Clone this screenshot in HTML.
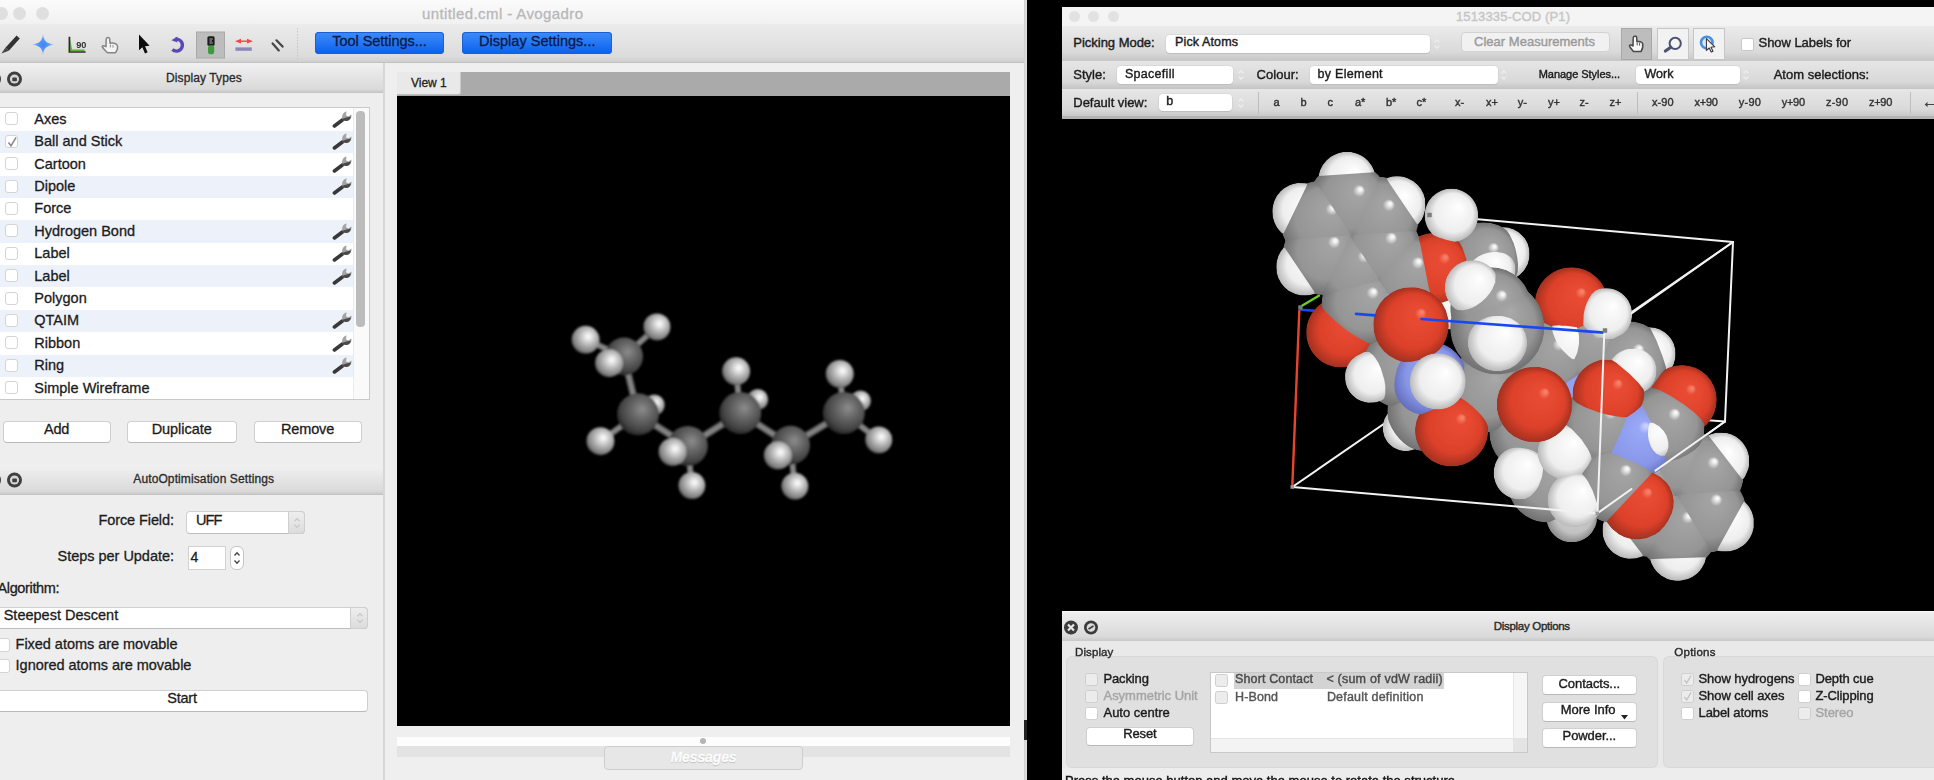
<!DOCTYPE html>
<html lang="en">
<head>
<meta charset="utf-8">
<title>Avogadro and Mercury</title>
<style>
html,body{margin:0;padding:0;}
body{width:1934px;height:780px;overflow:hidden;background:#000;position:relative;font-family:"Liberation Sans",sans-serif;color:#1c1c1c;}
.abs{position:absolute;}
#page{position:absolute;left:0;top:0;width:1934px;height:780px;overflow:hidden;filter:blur(0.45px);}
.t{position:absolute;white-space:nowrap;line-height:1;-webkit-text-stroke:0.3px;}
/* left window */
#av{position:absolute;left:0;top:0;width:1027px;height:780px;background:#ececec;overflow:hidden;}
#av .title{position:absolute;left:0;top:0;width:1027px;height:24px;background:linear-gradient(#fbfbfb,#f1f1f1);}
#av .toolbar{position:absolute;left:0;top:24px;width:1027px;height:38px;background:linear-gradient(#ececec,#dcdcdc 85%,#cfcfcf);border-bottom:1px solid #c2c2c2;}
.tl{position:absolute;width:13px;height:13px;border-radius:50%;background:#dfdfdf;}
.bluebtn{position:absolute;height:22px;border-radius:4px;background:linear-gradient(#3f8cf8,#0a60ee);color:#111a3a;font-size:14.5px;text-align:center;line-height:21px;box-shadow:0 0 0 1px #1b5fd6 inset;}
.dockhdr{position:absolute;left:0;width:383px;height:29px;background:linear-gradient(#f1f1f1,#dadada 90%,#c9c9c9);border-bottom:1px solid #c4c4c4;font-size:12px;text-align:center;line-height:29px;color:#222;}
.dockico{position:absolute;width:13px;height:13px;border-radius:50%;background:#444;}
.list{position:absolute;left:-4px;top:107px;width:372px;height:291px;background:#fff;border:1px solid #c9c9c9;overflow:hidden;}
.row{position:absolute;left:0;width:357px;height:22.35px;font-size:15px;}
.row.alt{background:#edf1f9;}
.row span{position:absolute;left:38px;top:3px;line-height:17px;white-space:nowrap;}
.cb{position:absolute;width:13px;height:13px;border:1px solid #d4d4d4;border-radius:3px;background:#fff;box-sizing:border-box;}
.wbtn{position:absolute;height:21px;border-radius:4px;background:#fff;border:1px solid #cfcfcf;border-bottom-color:#b9b9b9;box-sizing:border-box;text-align:center;font-size:14.5px;line-height:19px;color:#1a1a1a;}
.combo{position:absolute;border-radius:4px;background:#fff;border:1px solid #d0d0d0;border-bottom-color:#bdbdbd;box-sizing:border-box;font-size:14.5px;color:#1a1a1a;}
.combo .arr{position:absolute;right:-1px;top:-1px;bottom:-1px;width:15px;background:linear-gradient(#eeeeee,#dcdcdc);border:1px solid #cfcfcf;border-radius:0 4px 4px 0;box-sizing:border-box;}
.combo .txt{position:absolute;left:8px;top:0;white-space:nowrap;}
/* right window */
#mc .t{-webkit-text-stroke:0.4px;}
#mc{position:absolute;width:872px;height:780px;background:#000;overflow:hidden;font-size:13px;}
</style>
</head>
<body>
<div id="page">

<div id="av">
<div class="title"></div>
<div class="tl" style="left:-5px;top:7px"></div>
<div class="tl" style="left:13px;top:7px"></div>
<div class="tl" style="left:36px;top:7px"></div>
<div class="t" style="left:422.0px;top:6.2px;font-size:15px;line-height:15px;letter-spacing:0.395px;color:#b8b8b8;">untitled.cml - Avogadro</div>
<div class="toolbar"></div>
<svg class="abs" style="left:0;top:24px" width="310" height="40" viewBox="0 24 310 40">
<defs><filter id="bli"><feGaussianBlur stdDeviation="0.45"/></filter>
<radialGradient id="gstar" cx="0.5" cy="0.5" r="0.5"><stop offset="0" stop-color="#3f86f2"/><stop offset="0.55" stop-color="#5b9cf6"/><stop offset="1" stop-color="#b9d6fb"/></radialGradient></defs>
<g filter="url(#bli)">
<rect x="196.5" y="32" width="28" height="26" fill="#bdbdbd"/>
<rect x="196.5" y="32" width="28" height="26" fill="none" stroke="#a9a9a9" stroke-width="1"/>
<!-- pencil -->
<path d="M5.4 47.8 L16.6 35.6 L19.8 38.4 L8.8 50.8 Z" fill="#333"/>
<path d="M5.4 47.8 L8.8 50.8 L1.4 53.4 Z" fill="#444"/>
<!-- star -->
<path d="M43 33.8 C44 41 45.5 43.2 54.5 44.6 C45.5 46 44 48.2 43 55.4 C42 48.2 40.5 46 31.8 44.6 C40.5 43.2 42 41 43 33.8 Z" fill="url(#gstar)"/>
<!-- axes 90 -->
<path d="M70.2 38 L70.2 51 L84.5 51 L84.5 49.6 L72 49.6 Z" fill="#58b236"/>
<path d="M69.4 36.8 L69.4 52 L85.6 52" fill="none" stroke="#2b2b2b" stroke-width="1.7"/>
<text x="76.2" y="47.6" font-family="Liberation Sans, sans-serif" font-size="9.2" font-weight="bold" fill="#333">90</text>
<!-- hand -->
<path d="M107.6 37.6 C108.8 37.2 109.6 38 109.7 39.2 L110 43.2 C112.5 42.6 116.4 43.4 117.2 45.2 C118 47.4 117.2 50.4 115.4 52.8 L107.6 52.8 C105.6 50.8 103 48.4 102.2 46.6 C102.6 45.4 104.4 45.4 106 46.8 L106.2 39.2 C106.3 38.2 106.8 37.8 107.6 37.6 Z" fill="#f4f4f4" stroke="#868686" stroke-width="1.5" stroke-linejoin="round"/>
<path d="M110.4 44.6 L110.4 47.4 M113 45 L113 47.6" stroke="#8a8a8a" stroke-width="1"/>
<!-- cursor arrow -->
<path d="M139 34.6 L139 50.2 L142.4 47.2 L145 53.4 L147.6 52.2 L145 46.2 L149.6 45.8 Z" fill="#0a0a0a"/>
<!-- rotate -->
<path d="M175.4 39.2 A6 6 0 1 1 172.4 49.6" fill="none" stroke="#5a48b4" stroke-width="3.4"/>
<path d="M171.4 40.2 L177.4 36.4 L177.4 42.6 Z" fill="#5a48b4"/>
<!-- selected capsule -->
<rect x="207.4" y="36.2" width="7.2" height="9.6" rx="1.6" fill="#1a1a1a"/>
<rect x="208" y="45.6" width="6.2" height="8.6" rx="2.2" fill="#3d9a3d"/>
<path d="M209.4 39 L212.8 39 M209.4 41 L212 41 M209.4 43 L212.8 43" stroke="#bdbdbd" stroke-width="0.9"/>
<!-- red measure -->
<path d="M235 41.2 L241 38.8 L241 43.6 Z M253 41.2 L247 38.8 L247 43.6 Z" fill="#f04848"/>
<path d="M240 41.2 L248 41.2" stroke="#f04848" stroke-width="1.4"/>
<rect x="235.4" y="47.4" width="16.4" height="3.4" fill="#8a88b4"/>
<!-- two strokes -->
<path d="M272.6 43.4 L278.8 50.4 M276.4 40.3 L282.6 46.6" stroke="#444" stroke-width="2.2" stroke-linecap="round"/>
<!-- separators -->
<path d="M297.5 28 L297.5 60" stroke="#c4c4c4" stroke-width="1" stroke-dasharray="1.5 1.5"/>
</g>
</svg>

<div class="bluebtn" style="left:315px;top:32px;width:129px;"></div>
<div class="bluebtn" style="left:462px;top:32px;width:150px;"></div>
<div class="t" style="left:332.3px;top:34.2px;font-size:14.5px;line-height:14.5px;letter-spacing:-0.047px;color:#0c1a4a;">Tool Settings...</div>
<div class="t" style="left:479.0px;top:34.2px;font-size:14.5px;line-height:14.5px;letter-spacing:0.025px;color:#0c1a4a;">Display Settings...</div>
<div class="abs" style="left:0;top:63px;width:383px;height:717px;background:#eeeeee;"></div>
<div class="abs" style="left:383px;top:63px;width:1.5px;height:717px;background:#d6d6d6;"></div>
<div class="dockhdr" style="top:63px;"></div>
<div class="dockhdr" style="top:465px;"></div>
<div class="t" style="left:166.0px;top:71.5px;font-size:12px;line-height:12px;letter-spacing:0.102px;color:#2a2a2a;">Display Types</div>
<div class="t" style="left:133.3px;top:473.3px;font-size:12px;line-height:12px;letter-spacing:0.109px;color:#2a2a2a;">AutoOptimisation Settings</div>
<svg class="abs" style="left:-16px;top:71px" width="40" height="16" viewBox="0 0 40 16"><circle cx="9.5" cy="8" r="7.5" fill="#3f3f3f"/><circle cx="30.5" cy="8" r="7.5" fill="#3f3f3f"/><circle cx="30.5" cy="8" r="4.6" fill="#d6d6d6"/><rect x="28.3" y="6.6" width="4.6" height="3.6" rx="0.8" fill="#3f3f3f"/></svg>
<svg class="abs" style="left:-16px;top:472px" width="40" height="16" viewBox="0 0 40 16"><circle cx="9.5" cy="8" r="7.5" fill="#3f3f3f"/><circle cx="30.5" cy="8" r="7.5" fill="#3f3f3f"/><circle cx="30.5" cy="8" r="4.6" fill="#d6d6d6"/><rect x="28.3" y="6.6" width="4.6" height="3.6" rx="0.8" fill="#3f3f3f"/></svg>
<div class="list">
<div class="row" style="top:0.30px;height:22.4px"><div class="cb" style="left:8px;top:4px"></div><div class="t" style="left:37.3px;top:3.5px;font-size:14.5px;line-height:14.5px;">Axes</div><svg class="abs" style="left:335px;top:0.5px" width="22" height="20" viewBox="0 0 22 20"><path d="M2.4 17 L10.4 11" stroke="#383838" stroke-width="3.6" stroke-linecap="round" fill="none"/><path d="M10.2 9.4 C9.6 6 11.6 3.2 14.6 2.6 L14 6.2 L16.4 7.6 L19.4 5.6 C20 8.8 18 11.6 14.8 12 C12.6 12.2 10.8 11.2 10.2 9.4 Z" fill="#a4a4a4"/><path d="M10.4 9.8 L14.4 8.6 L19 7.6 C18.6 10.2 17 11.8 14.8 12 C12.6 12.2 11 11.4 10.4 9.8 Z" fill="#4a4a4a"/></svg></div>
<div class="row alt" style="top:22.70px;height:22.4px"><div class="cb" style="left:8px;top:4px"></div><svg class="abs" style="left:9px;top:5px" width="12" height="12" viewBox="0 0 12 12"><path d="M2.5 6.5 L5 9.8 L10 1.5" fill="none" stroke="#8a8a8a" stroke-width="1.5"/></svg><div class="t" style="left:37.3px;top:3.5px;font-size:14.5px;line-height:14.5px;">Ball and Stick</div><svg class="abs" style="left:335px;top:0.5px" width="22" height="20" viewBox="0 0 22 20"><path d="M2.4 17 L10.4 11" stroke="#383838" stroke-width="3.6" stroke-linecap="round" fill="none"/><path d="M10.2 9.4 C9.6 6 11.6 3.2 14.6 2.6 L14 6.2 L16.4 7.6 L19.4 5.6 C20 8.8 18 11.6 14.8 12 C12.6 12.2 10.8 11.2 10.2 9.4 Z" fill="#a4a4a4"/><path d="M10.4 9.8 L14.4 8.6 L19 7.6 C18.6 10.2 17 11.8 14.8 12 C12.6 12.2 11 11.4 10.4 9.8 Z" fill="#4a4a4a"/></svg></div>
<div class="row" style="top:45.10px;height:22.4px"><div class="cb" style="left:8px;top:4px"></div><div class="t" style="left:37.3px;top:3.5px;font-size:14.5px;line-height:14.5px;">Cartoon</div><svg class="abs" style="left:335px;top:0.5px" width="22" height="20" viewBox="0 0 22 20"><path d="M2.4 17 L10.4 11" stroke="#383838" stroke-width="3.6" stroke-linecap="round" fill="none"/><path d="M10.2 9.4 C9.6 6 11.6 3.2 14.6 2.6 L14 6.2 L16.4 7.6 L19.4 5.6 C20 8.8 18 11.6 14.8 12 C12.6 12.2 10.8 11.2 10.2 9.4 Z" fill="#a4a4a4"/><path d="M10.4 9.8 L14.4 8.6 L19 7.6 C18.6 10.2 17 11.8 14.8 12 C12.6 12.2 11 11.4 10.4 9.8 Z" fill="#4a4a4a"/></svg></div>
<div class="row alt" style="top:67.50px;height:22.4px"><div class="cb" style="left:8px;top:4px"></div><div class="t" style="left:37.3px;top:3.5px;font-size:14.5px;line-height:14.5px;">Dipole</div><svg class="abs" style="left:335px;top:0.5px" width="22" height="20" viewBox="0 0 22 20"><path d="M2.4 17 L10.4 11" stroke="#383838" stroke-width="3.6" stroke-linecap="round" fill="none"/><path d="M10.2 9.4 C9.6 6 11.6 3.2 14.6 2.6 L14 6.2 L16.4 7.6 L19.4 5.6 C20 8.8 18 11.6 14.8 12 C12.6 12.2 10.8 11.2 10.2 9.4 Z" fill="#a4a4a4"/><path d="M10.4 9.8 L14.4 8.6 L19 7.6 C18.6 10.2 17 11.8 14.8 12 C12.6 12.2 11 11.4 10.4 9.8 Z" fill="#4a4a4a"/></svg></div>
<div class="row" style="top:89.90px;height:22.4px"><div class="cb" style="left:8px;top:4px"></div><div class="t" style="left:37.3px;top:3.5px;font-size:14.5px;line-height:14.5px;">Force</div></div>
<div class="row alt" style="top:112.30px;height:22.4px"><div class="cb" style="left:8px;top:4px"></div><div class="t" style="left:37.3px;top:3.5px;font-size:14.5px;line-height:14.5px;">Hydrogen Bond</div><svg class="abs" style="left:335px;top:0.5px" width="22" height="20" viewBox="0 0 22 20"><path d="M2.4 17 L10.4 11" stroke="#383838" stroke-width="3.6" stroke-linecap="round" fill="none"/><path d="M10.2 9.4 C9.6 6 11.6 3.2 14.6 2.6 L14 6.2 L16.4 7.6 L19.4 5.6 C20 8.8 18 11.6 14.8 12 C12.6 12.2 10.8 11.2 10.2 9.4 Z" fill="#a4a4a4"/><path d="M10.4 9.8 L14.4 8.6 L19 7.6 C18.6 10.2 17 11.8 14.8 12 C12.6 12.2 11 11.4 10.4 9.8 Z" fill="#4a4a4a"/></svg></div>
<div class="row" style="top:134.70px;height:22.4px"><div class="cb" style="left:8px;top:4px"></div><div class="t" style="left:37.3px;top:3.5px;font-size:14.5px;line-height:14.5px;">Label</div><svg class="abs" style="left:335px;top:0.5px" width="22" height="20" viewBox="0 0 22 20"><path d="M2.4 17 L10.4 11" stroke="#383838" stroke-width="3.6" stroke-linecap="round" fill="none"/><path d="M10.2 9.4 C9.6 6 11.6 3.2 14.6 2.6 L14 6.2 L16.4 7.6 L19.4 5.6 C20 8.8 18 11.6 14.8 12 C12.6 12.2 10.8 11.2 10.2 9.4 Z" fill="#a4a4a4"/><path d="M10.4 9.8 L14.4 8.6 L19 7.6 C18.6 10.2 17 11.8 14.8 12 C12.6 12.2 11 11.4 10.4 9.8 Z" fill="#4a4a4a"/></svg></div>
<div class="row alt" style="top:157.10px;height:22.4px"><div class="cb" style="left:8px;top:4px"></div><div class="t" style="left:37.3px;top:3.5px;font-size:14.5px;line-height:14.5px;">Label</div><svg class="abs" style="left:335px;top:0.5px" width="22" height="20" viewBox="0 0 22 20"><path d="M2.4 17 L10.4 11" stroke="#383838" stroke-width="3.6" stroke-linecap="round" fill="none"/><path d="M10.2 9.4 C9.6 6 11.6 3.2 14.6 2.6 L14 6.2 L16.4 7.6 L19.4 5.6 C20 8.8 18 11.6 14.8 12 C12.6 12.2 10.8 11.2 10.2 9.4 Z" fill="#a4a4a4"/><path d="M10.4 9.8 L14.4 8.6 L19 7.6 C18.6 10.2 17 11.8 14.8 12 C12.6 12.2 11 11.4 10.4 9.8 Z" fill="#4a4a4a"/></svg></div>
<div class="row" style="top:179.50px;height:22.4px"><div class="cb" style="left:8px;top:4px"></div><div class="t" style="left:37.3px;top:3.5px;font-size:14.5px;line-height:14.5px;">Polygon</div></div>
<div class="row alt" style="top:201.90px;height:22.4px"><div class="cb" style="left:8px;top:4px"></div><div class="t" style="left:37.3px;top:3.5px;font-size:14.5px;line-height:14.5px;">QTAIM</div><svg class="abs" style="left:335px;top:0.5px" width="22" height="20" viewBox="0 0 22 20"><path d="M2.4 17 L10.4 11" stroke="#383838" stroke-width="3.6" stroke-linecap="round" fill="none"/><path d="M10.2 9.4 C9.6 6 11.6 3.2 14.6 2.6 L14 6.2 L16.4 7.6 L19.4 5.6 C20 8.8 18 11.6 14.8 12 C12.6 12.2 10.8 11.2 10.2 9.4 Z" fill="#a4a4a4"/><path d="M10.4 9.8 L14.4 8.6 L19 7.6 C18.6 10.2 17 11.8 14.8 12 C12.6 12.2 11 11.4 10.4 9.8 Z" fill="#4a4a4a"/></svg></div>
<div class="row" style="top:224.30px;height:22.4px"><div class="cb" style="left:8px;top:4px"></div><div class="t" style="left:37.3px;top:3.5px;font-size:14.5px;line-height:14.5px;">Ribbon</div><svg class="abs" style="left:335px;top:0.5px" width="22" height="20" viewBox="0 0 22 20"><path d="M2.4 17 L10.4 11" stroke="#383838" stroke-width="3.6" stroke-linecap="round" fill="none"/><path d="M10.2 9.4 C9.6 6 11.6 3.2 14.6 2.6 L14 6.2 L16.4 7.6 L19.4 5.6 C20 8.8 18 11.6 14.8 12 C12.6 12.2 10.8 11.2 10.2 9.4 Z" fill="#a4a4a4"/><path d="M10.4 9.8 L14.4 8.6 L19 7.6 C18.6 10.2 17 11.8 14.8 12 C12.6 12.2 11 11.4 10.4 9.8 Z" fill="#4a4a4a"/></svg></div>
<div class="row alt" style="top:246.70px;height:22.4px"><div class="cb" style="left:8px;top:4px"></div><div class="t" style="left:37.3px;top:3.5px;font-size:14.5px;line-height:14.5px;">Ring</div><svg class="abs" style="left:335px;top:0.5px" width="22" height="20" viewBox="0 0 22 20"><path d="M2.4 17 L10.4 11" stroke="#383838" stroke-width="3.6" stroke-linecap="round" fill="none"/><path d="M10.2 9.4 C9.6 6 11.6 3.2 14.6 2.6 L14 6.2 L16.4 7.6 L19.4 5.6 C20 8.8 18 11.6 14.8 12 C12.6 12.2 10.8 11.2 10.2 9.4 Z" fill="#a4a4a4"/><path d="M10.4 9.8 L14.4 8.6 L19 7.6 C18.6 10.2 17 11.8 14.8 12 C12.6 12.2 11 11.4 10.4 9.8 Z" fill="#4a4a4a"/></svg></div>
<div class="row" style="top:269.10px;height:22.4px"><div class="cb" style="left:8px;top:4px"></div><div class="t" style="left:37.3px;top:3.5px;font-size:14.5px;line-height:14.5px;">Simple Wireframe</div></div>
<div class="abs" style="left:356px;top:0;width:16px;height:291px;background:#fafafa;border-left:1px solid #ebebeb"></div>
<div class="abs" style="left:359px;top:3px;width:8.5px;height:216px;border-radius:4px;background:#bcbcbc"></div>
</div>
<div class="wbtn" style="left:3px;top:421px;width:108px;height:22px"></div>
<div class="wbtn" style="left:127px;top:421px;width:110px;height:22px"></div>
<div class="wbtn" style="left:254px;top:421px;width:108px;height:22px"></div>
<div class="t" style="left:44.0px;top:422.0px;font-size:14.5px;line-height:14.5px;letter-spacing:-0.250px;">Add</div>
<div class="t" style="left:151.7px;top:422.0px;font-size:14.5px;line-height:14.5px;letter-spacing:-0.056px;">Duplicate</div>
<div class="t" style="left:281.0px;top:422.0px;font-size:14.5px;line-height:14.5px;letter-spacing:-0.139px;">Remove</div>
<div class="t" style="left:98.5px;top:512.5px;font-size:14.5px;line-height:14.5px;letter-spacing:-0.096px;">Force Field:</div>
<div class="combo" style="left:186px;top:511px;width:119px;height:23px;"><div class="arr" style="width:17px"></div></div>
<div class="t" style="left:196.0px;top:513.0px;font-size:14.5px;line-height:14.5px;letter-spacing:-0.893px;">UFF</div>
<div class="t" style="left:57.6px;top:549.0px;font-size:14.5px;line-height:14.5px;letter-spacing:-0.030px;">Steps per Update:</div>
<div class="abs" style="left:188px;top:546px;width:38px;height:24px;background:#fff;border:1px solid #d2d2d2;box-sizing:border-box;"></div>
<div class="t" style="left:190.6px;top:550.2px;font-size:14px;line-height:14px;">4</div>
<div class="abs" style="left:230px;top:546px;width:14px;height:24px;border-radius:6px;background:#fff;border:1px solid #c6c6c6;box-sizing:border-box;"></div>
<svg class="abs" style="left:230px;top:546px" width="14" height="24" viewBox="0 0 14 24"><path d="M4.5 9.5 L7 6.8 L9.5 9.5 M4.5 14.5 L7 17.2 L9.5 14.5" fill="none" stroke="#444" stroke-width="1.3"/></svg>
<div class="t" style="left:-2.5px;top:581.0px;font-size:14.5px;line-height:14.5px;letter-spacing:-0.364px;">Algorithm:</div>
<div class="combo" style="left:-4px;top:607px;width:372px;height:22px;"><div class="arr" style="width:18px"></div></div>
<div class="t" style="left:3.7px;top:608.2px;font-size:14.5px;line-height:14.5px;letter-spacing:0.003px;">Steepest Descent</div>
<div class="cb" style="left:-4px;top:638px;width:14px;height:14px"></div>
<div class="t" style="left:15.6px;top:637.0px;font-size:14.5px;line-height:14.5px;letter-spacing:-0.036px;">Fixed atoms are movable</div>
<div class="cb" style="left:-4px;top:659px;width:14px;height:14px"></div>
<div class="t" style="left:15.6px;top:658.2px;font-size:14.5px;line-height:14.5px;letter-spacing:-0.030px;">Ignored atoms are movable</div>
<div class="wbtn" style="left:-4px;top:690px;width:372px;height:22px;"></div>
<div class="t" style="left:167.3px;top:691.0px;font-size:14.5px;line-height:14.5px;letter-spacing:-0.231px;">Start</div>
<svg class="abs" style="left:291.5px;top:514.5px" width="10" height="16" viewBox="0 0 10 16"><path d="M2.5 6.3 L5 3.6 L7.5 6.3 M2.5 9.7 L5 12.4 L7.5 9.7" fill="none" stroke="#c9c9c9" stroke-width="1.3"/></svg>
<svg class="abs" style="left:354.5px;top:610px" width="10" height="16" viewBox="0 0 10 16"><path d="M2.5 6.3 L5 3.6 L7.5 6.3 M2.5 9.7 L5 12.4 L7.5 9.7" fill="none" stroke="#c9c9c9" stroke-width="1.3"/></svg>
<div class="abs" style="left:384.5px;top:63px;width:642px;height:717px;background:#efefef;"></div>
<div class="abs" style="left:397px;top:72px;width:613px;height:24px;background:#aaaaaa;"></div>
<div class="abs" style="left:397px;top:72px;width:63px;height:22px;background:#e9e9e9;border-radius:0 0 3px 0;border-right:1px solid #c8c8c8;border-bottom:1px solid #bdbdbd;"></div>
<div class="t" style="left:411.0px;top:77.1px;font-size:12px;line-height:12px;letter-spacing:-0.020px;color:#222;">View 1</div>
<div class="abs" style="left:397px;top:96px;width:613px;height:630px;background:#000;"></div>
<svg class="abs" style="left:397px;top:96px" width="613" height="630" viewBox="397 96 613 630">
<defs><radialGradient id="gC" cx="0.58" cy="0.40" r="0.62" fx="0.60" fy="0.38"><stop offset="0" stop-color="#8c8c8c"/><stop offset="0.35" stop-color="#6a6a6a"/><stop offset="0.75" stop-color="#474747"/><stop offset="1" stop-color="#262626"/></radialGradient><radialGradient id="gH" cx="0.58" cy="0.40" r="0.62" fx="0.60" fy="0.38"><stop offset="0" stop-color="#ffffff"/><stop offset="0.15" stop-color="#ececec"/><stop offset="0.5" stop-color="#b4b4b4"/><stop offset="0.85" stop-color="#808080"/><stop offset="1" stop-color="#4c4c4c"/></radialGradient><filter id="bl1"><feGaussianBlur stdDeviation="0.9"/></filter></defs>
<g filter="url(#bl1)">
<circle cx="654.2" cy="405" r="10.5" fill="url(#gH)"/>
<circle cx="757.7" cy="399.5" r="10.5" fill="url(#gH)"/>
<circle cx="860.4" cy="400.9" r="10.5" fill="url(#gH)"/>
<line x1="624" y1="356.5" x2="638" y2="414.3" stroke="#6a6a6a" stroke-width="7"/>
<line x1="624" y1="356.5" x2="638" y2="414.3" stroke="#8a8a8a" stroke-width="2.4499999999999997"/>
<line x1="638" y1="414.3" x2="687.8" y2="446.0" stroke="#6a6a6a" stroke-width="7"/>
<line x1="638" y1="414.3" x2="687.8" y2="446.0" stroke="#8a8a8a" stroke-width="2.4499999999999997"/>
<line x1="687.8" y1="446.0" x2="740.2" y2="413" stroke="#6a6a6a" stroke-width="7"/>
<line x1="687.8" y1="446.0" x2="740.2" y2="413" stroke="#8a8a8a" stroke-width="2.4499999999999997"/>
<line x1="740.2" y1="413" x2="790.5" y2="445.3" stroke="#6a6a6a" stroke-width="7"/>
<line x1="740.2" y1="413" x2="790.5" y2="445.3" stroke="#8a8a8a" stroke-width="2.4499999999999997"/>
<line x1="790.5" y1="445.3" x2="843.8" y2="413" stroke="#6a6a6a" stroke-width="7"/>
<line x1="790.5" y1="445.3" x2="843.8" y2="413" stroke="#8a8a8a" stroke-width="2.4499999999999997"/>
<line x1="624" y1="356.5" x2="585.6" y2="339.8" stroke="#787878" stroke-width="6"/>
<line x1="624" y1="356.5" x2="585.6" y2="339.8" stroke="#8a8a8a" stroke-width="2.0999999999999996"/>
<line x1="624" y1="356.5" x2="656.9" y2="326.9" stroke="#787878" stroke-width="6"/>
<line x1="624" y1="356.5" x2="656.9" y2="326.9" stroke="#8a8a8a" stroke-width="2.0999999999999996"/>
<line x1="638" y1="414.3" x2="600.4" y2="441.2" stroke="#787878" stroke-width="6"/>
<line x1="638" y1="414.3" x2="600.4" y2="441.2" stroke="#8a8a8a" stroke-width="2.0999999999999996"/>
<line x1="687.8" y1="446.0" x2="691.8" y2="485.6" stroke="#787878" stroke-width="6"/>
<line x1="687.8" y1="446.0" x2="691.8" y2="485.6" stroke="#8a8a8a" stroke-width="2.0999999999999996"/>
<line x1="740.2" y1="413" x2="736.1" y2="371.3" stroke="#787878" stroke-width="6"/>
<line x1="740.2" y1="413" x2="736.1" y2="371.3" stroke="#8a8a8a" stroke-width="2.0999999999999996"/>
<line x1="790.5" y1="445.3" x2="794.8" y2="486.2" stroke="#787878" stroke-width="6"/>
<line x1="790.5" y1="445.3" x2="794.8" y2="486.2" stroke="#8a8a8a" stroke-width="2.0999999999999996"/>
<line x1="843.8" y1="413" x2="839.7" y2="374" stroke="#787878" stroke-width="6"/>
<line x1="843.8" y1="413" x2="839.7" y2="374" stroke="#8a8a8a" stroke-width="2.0999999999999996"/>
<line x1="843.8" y1="413" x2="878.7" y2="439.9" stroke="#787878" stroke-width="6"/>
<line x1="843.8" y1="413" x2="878.7" y2="439.9" stroke="#8a8a8a" stroke-width="2.0999999999999996"/>
<circle cx="585.6" cy="339.8" r="14" fill="url(#gH)"/>
<circle cx="656.9" cy="326.9" r="13.5" fill="url(#gH)"/>
<circle cx="600.4" cy="441.2" r="14" fill="url(#gH)"/>
<circle cx="691.8" cy="485.6" r="13.5" fill="url(#gH)"/>
<circle cx="736.1" cy="371.3" r="14" fill="url(#gH)"/>
<circle cx="794.8" cy="486.2" r="13.5" fill="url(#gH)"/>
<circle cx="839.7" cy="374" r="14" fill="url(#gH)"/>
<circle cx="878.7" cy="439.9" r="13.5" fill="url(#gH)"/>
<circle cx="624" cy="356.5" r="19" fill="url(#gC)"/>
<circle cx="638" cy="414.3" r="21" fill="url(#gC)"/>
<circle cx="687.8" cy="446.0" r="20" fill="url(#gC)"/>
<circle cx="740.2" cy="413" r="21" fill="url(#gC)"/>
<circle cx="790.5" cy="445.3" r="19.5" fill="url(#gC)"/>
<circle cx="843.8" cy="413" r="21" fill="url(#gC)"/>
<circle cx="609" cy="363.2" r="14" fill="url(#gH)"/>
<circle cx="672.5" cy="452" r="14" fill="url(#gH)"/>
<circle cx="777.8" cy="455.5" r="14" fill="url(#gH)"/>
</g></svg>
<div class="abs" style="left:397px;top:737px;width:613px;height:9px;background:#fdfdfd;"></div>
<div class="abs" style="left:397px;top:746px;width:613px;height:11px;background:#e3e3e3;"></div>
<div class="abs" style="left:700px;top:738px;width:6px;height:6px;border-radius:50%;background:#b5b5b5;"></div>
<div class="abs" style="left:604px;top:746px;width:199px;height:24px;border-radius:4px;background:#e7e7e7;border:1px solid #cdcdcd;box-sizing:border-box;"></div>
<div class="t" style="left:670.6px;top:750.2px;font-size:14px;line-height:14px;letter-spacing:-0.133px;color:#fcfcfc;font-weight:bold;font-style:italic;text-shadow:0 1px 1px #b8b8b8;">Messages</div>
<div class="abs" style="left:1024px;top:0;width:3px;height:780px;background:linear-gradient(90deg,#cfcfcf,#e2e2e2);"></div>
<div class="abs" style="left:1024px;top:720px;width:3px;height:20px;background:#222;"></div>
</div>
<div id="mc" style="left:1062px;top:0px;">
<div class="abs" style="left:0.0px;top:0.0px;width:880.0px;height:7.0px;background:#000;"></div>
<div class="abs" style="left:0.0px;top:7.0px;width:880.0px;height:19.0px;background:#f4f4f4;"></div>
<div class="abs" style="left:7.0px;top:10.5px;width:11.0px;height:11.0px;border-radius:50%;background:#e2e2e2;"></div>
<div class="abs" style="left:26.0px;top:10.5px;width:11.0px;height:11.0px;border-radius:50%;background:#e2e2e2;"></div>
<div class="abs" style="left:46.0px;top:10.5px;width:11.0px;height:11.0px;border-radius:50%;background:#e2e2e2;"></div>
<div class="t" style="left:394.0px;top:10.0px;font-size:13px;line-height:13px;letter-spacing:0.133px;color:#c6c6c6;">1513335-COD (P1)</div>
<div class="abs" style="left:0.0px;top:26.0px;width:880.0px;height:35.0px;background:linear-gradient(#ebebeb,#d9d9d9 75%,#c6c6c6);"></div>
<div class="abs" style="left:0.0px;top:61.0px;width:880.0px;height:28.0px;background:linear-gradient(#e6e6e6,#d8d8d8 75%,#c4c4c4);"></div>
<div class="abs" style="left:0.0px;top:89.0px;width:880.0px;height:27.0px;background:linear-gradient(#e6e6e6,#dadada 75%,#c8c8c8);"></div>
<div class="abs" style="left:0.0px;top:116.0px;width:880.0px;height:3.0px;background:#b4b4b4;"></div>
<div class="t" style="left:11.3px;top:36.2px;font-size:13px;line-height:13px;letter-spacing:-0.021px;">Picking Mode:</div>
<div class="abs" style="left:104.0px;top:34.5px;width:264.0px;height:18.5px;background:#fff;border-radius:4px;box-shadow:0 1px 1px #bdbdbd,0 0 0 0.5px #d0d0d0;"></div>
<div class="t" style="left:113.0px;top:35.5px;font-size:12.5px;line-height:12.5px;letter-spacing:0.131px;">Pick Atoms</div>
<div class="abs" style="left:399.0px;top:32.0px;width:149.0px;height:20.0px;background:#f1f1f1;border:1px solid #d2d2d2;border-radius:4px;box-sizing:border-box;"></div>
<div class="t" style="left:412.0px;top:34.6px;font-size:13px;line-height:13px;letter-spacing:0.020px;color:#9b9b9b;">Clear Measurements</div>
<div class="abs" style="left:559.0px;top:28.0px;width:31.0px;height:32.0px;background:#bdbdbd;border:1px solid #a8a8a8;box-sizing:border-box;"></div>
<div class="abs" style="left:595.0px;top:28.0px;width:32.0px;height:32.0px;background:#f2f2f2;border:1px solid #c6c6c6;box-sizing:border-box;"></div>
<div class="abs" style="left:631.0px;top:28.0px;width:32.0px;height:32.0px;background:#f2f2f2;border:1px solid #c6c6c6;box-sizing:border-box;"></div>
<svg class="abs" style="left:553px;top:24px" width="120" height="42" viewBox="1615 24 120 42">
<g filter="url(#bli)">
<!-- hand -->
<path d="M1634.6 36.2 C1635.8 35.8 1636.6 36.6 1636.7 37.8 L1636.9 41.6 C1639.2 41 1642 41.8 1642.6 43.6 C1643.2 46 1642.6 48.8 1641 51.6 L1633.6 51.6 C1632 49.8 1630 47.6 1629.4 45.8 C1629.8 44.6 1631.6 44.6 1633 46 L1633.2 37.8 C1633.3 36.8 1633.8 36.4 1634.6 36.2 Z" fill="#fafafa" stroke="#4a4a4a" stroke-width="1.5" stroke-linejoin="round"/>
<path d="M1637.2 42.4 L1637.2 45.4 M1639.6 42.8 L1639.6 45.6" stroke="#555" stroke-width="1"/>
<!-- magnifier -->
<circle cx="1675.2" cy="43.4" r="5.6" fill="#f4f6f4" stroke="#4c5272" stroke-width="2"/>
<path d="M1670.8 47.2 L1665.4 51" stroke="#4c5272" stroke-width="3.2" stroke-linecap="round"/>
<!-- rotate-select -->
<circle cx="1706.8" cy="42.6" r="5.8" fill="#dfeaf8" stroke="#4a8fe0" stroke-width="2.6"/>
<path d="M1706.4 38.6 L1706.4 50.4 L1709.2 48 L1711.2 52 L1713 51.2 L1711 47.2 L1714.8 46.8 Z" fill="#f4f4f4" stroke="#3a3a3a" stroke-width="1.1" stroke-linejoin="round"/>
</g>
</svg>

<div class="abs" style="left:679.0px;top:38.0px;width:12.5px;height:12.5px;background:#fff;border:1px solid #c9c9c9;border-radius:2px;box-sizing:border-box;"></div>
<div class="t" style="left:696.5px;top:36.2px;font-size:13px;line-height:13px;letter-spacing:-0.045px;">Show Labels for</div>
<div class="t" style="left:11.3px;top:67.7px;font-size:13px;line-height:13px;letter-spacing:-0.003px;">Style:</div>
<div class="abs" style="left:55.0px;top:66.0px;width:115.5px;height:17.5px;background:#fff;border-radius:4px;box-shadow:0 1px 1px #bdbdbd,0 0 0 0.5px #d0d0d0;"></div>
<div class="t" style="left:63.0px;top:67.5px;font-size:12.5px;line-height:12.5px;letter-spacing:0.281px;">Spacefill</div>
<div class="t" style="left:194.6px;top:67.7px;font-size:13px;line-height:13px;letter-spacing:0.015px;">Colour:</div>
<div class="abs" style="left:248.0px;top:66.0px;width:187.5px;height:17.5px;background:#fff;border-radius:4px;box-shadow:0 1px 1px #bdbdbd,0 0 0 0.5px #d0d0d0;"></div>
<div class="t" style="left:255.6px;top:67.5px;font-size:12.5px;line-height:12.5px;letter-spacing:0.274px;">by Element</div>
<div class="t" style="left:476.7px;top:69.3px;font-size:11px;line-height:11px;letter-spacing:-0.035px;">Manage Styles...</div>
<div class="abs" style="left:574.4px;top:66.0px;width:103.5px;height:17.5px;background:#fff;border-radius:4px;box-shadow:0 1px 1px #bdbdbd,0 0 0 0.5px #d0d0d0;"></div>
<div class="t" style="left:582.5px;top:67.5px;font-size:12.5px;line-height:12.5px;letter-spacing:0.021px;">Work</div>
<div class="t" style="left:711.7px;top:67.7px;font-size:13px;line-height:13px;letter-spacing:0.002px;">Atom selections:</div>
<div class="t" style="left:11.3px;top:95.6px;font-size:13px;line-height:13px;letter-spacing:-0.035px;">Default view:</div>
<div class="abs" style="left:97.0px;top:93.5px;width:73.0px;height:17.5px;background:#fff;border-radius:4px;box-shadow:0 1px 1px #bdbdbd,0 0 0 0.5px #d0d0d0;"></div>
<div class="t" style="left:104.3px;top:95.0px;font-size:12.5px;line-height:12.5px;">b</div>
<div class="abs" style="left:196.0px;top:92.0px;width:1.0px;height:22.0px;background:#bdbdbd;"></div>
<div class="abs" style="left:575.0px;top:92.0px;width:1.0px;height:22.0px;background:#bdbdbd;"></div>
<div class="abs" style="left:848.0px;top:92.0px;width:1.0px;height:22.0px;background:#bdbdbd;"></div>
<div class="t" style="left:211.5px;top:97.3px;font-size:11px;line-height:11px;color:#333;">a</div>
<div class="t" style="left:238.5px;top:97.3px;font-size:11px;line-height:11px;color:#333;">b</div>
<div class="t" style="left:265.5px;top:97.3px;font-size:11px;line-height:11px;color:#333;">c</div>
<div class="t" style="left:293.0px;top:97.3px;font-size:11px;line-height:11px;color:#333;">a*</div>
<div class="t" style="left:324.0px;top:97.3px;font-size:11px;line-height:11px;color:#333;">b*</div>
<div class="t" style="left:354.5px;top:97.3px;font-size:11px;line-height:11px;color:#333;">c*</div>
<div class="t" style="left:393.0px;top:97.3px;font-size:11px;line-height:11px;color:#333;">x-</div>
<div class="t" style="left:424.0px;top:97.3px;font-size:11px;line-height:11px;color:#333;">x+</div>
<div class="t" style="left:455.7px;top:97.3px;font-size:11px;line-height:11px;color:#333;">y-</div>
<div class="t" style="left:486.0px;top:97.3px;font-size:11px;line-height:11px;color:#333;">y+</div>
<div class="t" style="left:517.4px;top:97.3px;font-size:11px;line-height:11px;color:#333;">z-</div>
<div class="t" style="left:547.6px;top:97.3px;font-size:11px;line-height:11px;color:#333;">z+</div>
<div class="t" style="left:590.0px;top:97.3px;font-size:11px;line-height:11px;letter-spacing:0.067px;color:#333;">x-90</div>
<div class="t" style="left:632.6px;top:97.3px;font-size:11px;line-height:11px;letter-spacing:-0.320px;color:#333;">x+90</div>
<div class="t" style="left:676.8px;top:97.3px;font-size:11px;line-height:11px;letter-spacing:0.234px;color:#333;">y-90</div>
<div class="t" style="left:719.8px;top:97.3px;font-size:11px;line-height:11px;letter-spacing:-0.320px;color:#333;">y+90</div>
<div class="t" style="left:764.0px;top:97.3px;font-size:11px;line-height:11px;letter-spacing:0.200px;color:#333;">z-90</div>
<div class="t" style="left:807.0px;top:97.3px;font-size:11px;line-height:11px;letter-spacing:-0.287px;color:#333;">z+90</div>
<div class="t" style="left:860.0px;top:94.2px;font-size:15px;line-height:15px;color:#333;">←</div>
<svg class="abs" style="left:369.5px;top:36px" width="10" height="16" viewBox="0 0 10 16"><path d="M2.7 6.3 L5 3.9 L7.3 6.3 M2.7 9.7 L5 12.1 L7.3 9.7" fill="none" stroke="#ececec" stroke-width="1.5"/></svg>
<svg class="abs" style="left:173.79999999999995px;top:67px" width="10" height="16" viewBox="0 0 10 16"><path d="M2.7 6.3 L5 3.9 L7.3 6.3 M2.7 9.7 L5 12.1 L7.3 9.7" fill="none" stroke="#ececec" stroke-width="1.5"/></svg>
<svg class="abs" style="left:436.5px;top:67px" width="10" height="16" viewBox="0 0 10 16"><path d="M2.7 6.3 L5 3.9 L7.3 6.3 M2.7 9.7 L5 12.1 L7.3 9.7" fill="none" stroke="#ececec" stroke-width="1.5"/></svg>
<svg class="abs" style="left:678.8px;top:67px" width="10" height="16" viewBox="0 0 10 16"><path d="M2.7 6.3 L5 3.9 L7.3 6.3 M2.7 9.7 L5 12.1 L7.3 9.7" fill="none" stroke="#ececec" stroke-width="1.5"/></svg>
<svg class="abs" style="left:173.79999999999995px;top:94.5px" width="10" height="16" viewBox="0 0 10 16"><path d="M2.7 6.3 L5 3.9 L7.3 6.3 M2.7 9.7 L5 12.1 L7.3 9.7" fill="none" stroke="#ececec" stroke-width="1.5"/></svg>
<div class="abs" style="left:0.0px;top:119.0px;width:880.0px;height:492.0px;background:#000;"></div>
<svg class="abs" style="left:200px;top:119px" width="528" height="492" viewBox="1262 119 528 492">
<defs>
<radialGradient id="sC" cx="0.5" cy="0.5" r="0.5" fx="0.65" fy="0.325"><stop offset="0" stop-color="#f6f6f6"/><stop offset="0.035" stop-color="#f6f6f6"/><stop offset="0.15" stop-color="#a3a3a3"/><stop offset="0.72" stop-color="#959595"/><stop offset="1" stop-color="#707070"/></radialGradient>
<radialGradient id="sCn" cx="0.5" cy="0.5" r="0.5" fx="0.65" fy="0.325"><stop offset="0" stop-color="#a8a8a8"/><stop offset="0.035" stop-color="#a8a8a8"/><stop offset="0.15" stop-color="#a3a3a3"/><stop offset="0.72" stop-color="#959595"/><stop offset="1" stop-color="#707070"/></radialGradient>
<radialGradient id="sH" cx="0.5" cy="0.5" r="0.5" fx="0.65" fy="0.325"><stop offset="0" stop-color="#ffffff"/><stop offset="0.035" stop-color="#ffffff"/><stop offset="0.15" stop-color="#fbfbfb"/><stop offset="0.72" stop-color="#eeeeee"/><stop offset="1" stop-color="#b8b8b8"/></radialGradient>
<radialGradient id="sHd" cx="0.5" cy="0.5" r="0.5" fx="0.65" fy="0.325"><stop offset="0" stop-color="#e0e0e0"/><stop offset="0.035" stop-color="#e0e0e0"/><stop offset="0.15" stop-color="#d0d0d0"/><stop offset="0.72" stop-color="#c2c2c2"/><stop offset="1" stop-color="#8a8a8a"/></radialGradient>
<radialGradient id="sO" cx="0.5" cy="0.5" r="0.5" fx="0.65" fy="0.325"><stop offset="0" stop-color="#f58068"/><stop offset="0.035" stop-color="#f58068"/><stop offset="0.15" stop-color="#e94b33"/><stop offset="0.72" stop-color="#dd412a"/><stop offset="1" stop-color="#a2301f"/></radialGradient>
<radialGradient id="sN" cx="0.5" cy="0.5" r="0.5" fx="0.65" fy="0.325"><stop offset="0" stop-color="#c8d0ff"/><stop offset="0.035" stop-color="#c8d0ff"/><stop offset="0.15" stop-color="#98a7f6"/><stop offset="0.72" stop-color="#8896e8"/><stop offset="1" stop-color="#626dbb"/></radialGradient>
<filter id="bl2"><feGaussianBlur stdDeviation="0.6"/></filter>
<clipPath id="k31"><path d="M1387.0,414.0 1384.3,418.7 1383.3,421.7 1382.7,425.7 1382.7,430.0 1384.3,437.0 1387.7,442.7 1393.3,447.7 1399.7,450.3 1403.7,451.0 1408.0,451.0 1415.0,449.3 1415.0,448.0 1410.3,446.0 1407.3,444.0 1398.3,435.0 1393.7,428.3 1390.3,422.0 1389.0,418.0 1388.7,414.0Z"/></clipPath>
<clipPath id="k18"><path d="M1502.0,227.3 1502.0,228.7 1505.7,231.7 1508.7,236.0 1511.3,241.3 1514.0,248.7 1516.0,257.0 1517.0,265.7 1516.7,270.7 1516.0,273.3 1515.0,275.0 1515.0,277.0 1516.7,277.0 1519.7,275.0 1524.0,270.7 1527.7,264.3 1529.3,258.3 1529.3,249.3 1527.7,243.3 1525.0,238.3 1518.3,231.7 1513.3,229.0 1507.3,227.3Z"/></clipPath>
<clipPath id="k57"><path d="M1710.0,434.7 1703.7,434.3 1675.3,494.7 1675.3,496.0 1740.0,491.3 1742.3,484.7 1743.0,481.3 1743.0,477.7Z"/></clipPath>
<clipPath id="k58"><path d="M1709.0,434.7 1709.0,436.3 1742.0,479.0 1743.3,479.0 1745.0,476.7 1748.3,469.0 1749.0,465.7 1749.0,456.3 1747.0,449.3 1743.0,442.7 1739.0,438.7 1735.7,436.3 1730.7,434.0 1727.0,433.0 1716.0,432.7Z"/></clipPath>
<clipPath id="k59"><path d="M1740.0,490.3 1735.7,490.3 1735.3,490.7 1675.3,495.0 1675.7,497.0 1709.7,552.3 1713.3,552.0 1718.7,550.7 1745.0,503.0 1745.0,501.7 1743.7,497.3Z"/></clipPath>
<clipPath id="k60"><path d="M1745.0,502.0 1743.7,502.0 1718.3,547.7 1717.7,549.0 1717.7,550.7 1720.7,551.3 1730.0,551.3 1737.0,549.3 1744.0,545.0 1747.3,541.7 1750.3,537.3 1752.3,533.0 1753.7,527.7 1753.7,518.3 1752.0,512.0 1750.0,508.0 1748.0,505.0Z"/></clipPath>
<clipPath id="k61"><path d="M1675.0,495.3 1672.7,500.3 1672.0,507.7 1668.7,516.7 1664.3,523.7 1658.7,530.0 1647.0,555.0 1647.0,557.3 1650.3,560.3 1706.0,558.3 1710.7,552.7 1710.7,550.7 1676.7,495.3Z"/></clipPath>
<clipPath id="k62"><path d="M1705.7,557.3 1653.3,559.0 1650.3,559.3 1650.3,560.7 1651.7,564.3 1653.7,568.0 1655.7,570.7 1660.7,575.3 1666.7,578.7 1669.7,579.7 1675.7,580.7 1680.0,580.7 1688.0,579.0 1692.3,577.0 1696.7,574.0 1699.7,571.0 1702.3,567.3 1704.7,562.7 1705.7,559.3Z"/></clipPath>
<clipPath id="k63"><path d="M1659.7,530.3 1658.0,530.3 1654.0,533.3 1645.7,537.0 1638.7,538.3 1634.7,538.3 1630.3,537.3 1628.0,537.3 1628.0,538.7 1641.7,556.3 1648.0,556.7 1659.3,532.7ZM1676.3,495.0 1671.7,495.3 1672.3,501.3 1674.0,501.3 1676.3,496.3Z"/></clipPath>
<clipPath id="k64"><path d="M1603.7,521.0 1602.7,525.3 1602.7,534.7 1603.3,538.0 1606.3,545.0 1608.7,548.3 1613.0,552.7 1620.0,556.7 1624.3,558.0 1628.7,558.7 1636.3,558.3 1642.7,556.3 1642.3,554.3 1629.0,537.0 1625.3,536.0 1620.0,533.3 1616.7,531.0 1612.7,527.3 1608.0,521.0 1606.3,520.7Z"/></clipPath>
<clipPath id="k65"><path d="M1652.0,472.7 1652.3,474.3 1655.3,475.7 1660.3,479.0 1666.7,485.3 1670.7,492.3 1671.7,496.3 1676.3,496.0 1676.3,494.7 1660.3,468.7 1659.0,468.7 1657.3,470.0Z"/></clipPath>
<clipPath id="k66"><path d="M1704.0,433.3 1702.7,433.3 1701.0,439.3 1699.0,443.0 1693.7,448.7 1688.0,452.7 1679.3,457.0 1670.3,460.0 1664.7,461.0 1662.0,465.3 1659.3,468.3 1659.3,470.3 1675.0,495.7 1676.7,495.7 1704.7,436.3 1704.7,434.0Z"/></clipPath>
<clipPath id="k17"><path d="M1456.7,240.3 1456.7,241.7 1458.7,244.0 1461.7,249.7 1464.3,257.0 1465.3,262.0 1469.3,261.3 1474.7,261.3 1480.0,257.3 1485.0,255.0 1489.3,253.7 1496.0,253.0 1501.7,254.0 1507.7,257.0 1510.3,259.3 1512.3,262.0 1514.3,267.3 1514.0,276.3 1516.0,276.7 1517.7,272.0 1518.0,264.3 1517.3,257.7 1515.7,249.7 1513.7,243.3 1509.7,234.7 1506.7,230.3 1503.0,227.3 1497.7,224.7 1490.3,222.7 1480.0,222.3 1475.7,223.0 1472.3,229.7 1467.0,235.3 1461.7,238.7Z"/></clipPath>
<clipPath id="k30"><path d="M1387.7,404.3 1387.3,415.0 1388.3,420.7 1391.7,428.0 1395.3,433.7 1399.3,438.7 1404.0,443.3 1409.0,447.0 1416.3,450.0 1422.3,451.0 1422.3,449.3 1421.0,447.7 1418.0,441.3 1416.7,436.7 1416.0,432.0 1416.3,427.3 1417.3,423.0 1419.3,417.7 1421.0,415.0 1421.0,413.3 1415.0,411.7 1409.7,409.0 1406.0,406.3 1401.3,401.3 1399.3,401.3 1392.0,404.3 1390.3,404.7Z"/></clipPath>
<clipPath id="k39"><path d="M1597.0,517.3 1596.0,516.7 1594.7,516.7 1593.3,518.3 1588.7,522.0 1581.7,525.0 1576.0,526.0 1571.3,525.7 1565.7,524.0 1559.7,520.7 1556.3,517.7 1555.0,517.7 1549.7,520.7 1547.0,521.3 1547.0,523.0 1548.7,528.0 1550.3,531.0 1554.7,536.0 1558.3,538.7 1563.3,541.0 1567.7,542.0 1575.7,542.0 1579.0,541.3 1584.0,539.3 1588.0,536.7 1591.7,533.0 1595.3,526.7 1596.7,522.3Z"/></clipPath>
<clipPath id="k50"><path d="M1579.3,374.0 1576.3,374.0 1564.3,382.0 1564.3,384.0 1567.0,388.0 1569.0,392.7 1570.7,400.0 1572.0,400.0 1573.7,398.0 1573.7,390.7 1574.3,387.0 1576.0,382.0 1578.3,377.3 1579.7,375.7Z"/></clipPath>
<clipPath id="k16"><path d="M1447.0,299.3 1445.0,300.3 1440.0,301.7 1440.0,303.3 1442.3,306.3 1445.0,311.7 1446.3,315.7 1447.7,324.7 1447.3,329.3 1451.3,329.3 1451.3,324.3 1452.3,319.0 1452.3,315.3 1451.3,310.7 1451.7,303.3 1449.0,299.3Z"/></clipPath>
<clipPath id="k35"><path d="M1489.3,431.0 1489.7,438.7 1491.7,446.3 1494.7,452.7 1498.3,457.7 1500.0,457.7 1504.0,453.3 1506.7,451.3 1510.3,449.7 1515.7,448.7 1522.0,449.0 1526.7,450.0 1532.3,452.0 1537.7,455.3 1539.0,455.3 1539.0,448.3 1541.0,442.0 1541.0,440.7 1537.7,440.7 1537.3,441.0 1529.0,440.7 1524.7,439.7 1518.7,437.3 1513.7,434.3 1510.3,431.7 1507.0,428.3 1503.3,423.0 1501.7,423.0 1499.3,425.3 1494.0,429.3Z"/></clipPath>
<clipPath id="k42"><path d="M1584.7,324.3 1583.0,324.3 1576.0,327.3 1576.0,329.0 1577.7,334.7 1578.0,342.7 1577.0,349.0 1575.0,355.0 1573.3,358.0 1573.3,360.3 1576.0,369.7 1577.0,375.0 1579.7,375.3 1582.0,372.3 1588.7,366.3 1595.7,362.7 1602.3,360.7 1607.0,349.0 1611.7,339.3 1611.7,338.0 1607.3,338.0 1603.0,337.0 1595.3,333.7 1589.7,329.7Z"/></clipPath>
<clipPath id="k40"><path d="M1542.0,466.0 1541.7,472.3 1539.3,481.0 1536.3,487.0 1533.7,490.7 1528.3,495.7 1523.7,498.0 1517.3,498.3 1514.0,497.7 1511.7,496.7 1510.3,496.7 1510.3,498.0 1513.7,504.3 1516.7,508.3 1521.3,513.0 1525.3,516.0 1531.7,519.3 1536.3,521.0 1543.7,522.3 1549.0,522.3 1556.0,519.0 1556.0,517.3 1552.0,512.0 1550.3,508.3 1549.0,503.7 1548.7,499.0 1549.7,493.7 1551.3,489.3 1554.3,484.3 1559.3,479.0 1559.3,477.7 1550.7,473.3 1547.7,471.0 1543.3,466.0Z"/></clipPath>
<clipPath id="k45"><path d="M1648.7,327.3 1648.7,328.7 1650.3,331.0 1653.3,337.0 1659.0,350.7 1665.0,368.7 1665.0,370.0 1666.7,370.3 1670.0,368.3 1671.7,368.0 1673.7,364.3 1675.3,358.3 1675.3,349.3 1673.7,343.3 1672.0,340.0 1670.0,337.0 1665.7,332.7 1662.7,330.7 1659.3,329.0 1655.0,327.7Z"/></clipPath>
<clipPath id="k44"><path d="M1542.7,321.0 1543.0,331.7 1542.3,336.0 1540.7,342.0 1537.0,350.0 1532.0,357.0 1527.0,362.0 1521.7,366.0 1515.0,369.3 1515.0,370.7 1516.0,372.3 1517.7,372.3 1522.3,370.0 1530.3,368.0 1538.3,368.0 1544.7,369.3 1549.0,371.0 1555.3,374.7 1558.3,377.0 1564.0,383.3 1565.3,383.3 1578.0,375.0 1577.7,371.3 1574.3,358.3 1570.0,355.3 1563.3,348.7 1558.3,341.7 1556.3,338.0 1554.0,332.0 1553.3,329.0 1553.3,325.7 1544.0,321.0Z"/></clipPath>
<clipPath id="k47"><path d="M1629.7,321.3 1629.0,323.7 1626.7,328.0 1622.7,332.0 1619.3,334.3 1610.3,338.3 1601.3,359.0 1601.3,360.7 1608.3,360.7 1610.7,361.3 1612.7,361.3 1614.3,359.0 1619.3,354.3 1624.0,351.7 1629.3,350.0 1634.7,349.7 1638.7,350.3 1641.7,351.3 1647.3,354.7 1651.7,359.3 1654.0,363.7 1655.3,368.7 1655.3,373.0 1653.7,379.0 1651.0,383.7 1646.7,388.3 1643.0,390.7 1643.0,393.3 1644.3,393.3 1652.7,388.7 1657.7,381.0 1666.3,370.3 1666.0,367.3 1662.7,356.7 1656.7,341.0 1650.0,327.7 1644.0,324.3 1639.3,322.7 1634.7,321.7Z"/></clipPath>
<clipPath id="k14"><path d="M1321.0,303.3 1318.3,305.3 1313.0,311.0 1308.7,318.7 1307.3,322.7 1306.3,328.0 1306.3,336.7 1307.0,340.7 1308.7,346.0 1311.0,350.7 1314.3,355.3 1318.3,359.3 1323.0,362.7 1327.7,365.0 1334.7,367.0 1337.0,367.3 1348.0,367.0 1350.3,363.3 1354.7,359.3 1361.7,354.7 1367.0,352.3 1371.7,344.3 1371.7,342.7 1368.7,341.7 1362.0,338.3 1352.0,332.0 1343.3,325.7 1332.0,316.0 1324.3,307.7 1322.7,304.7 1322.7,303.3Z"/></clipPath>
<clipPath id="k28"><path d="M1376.0,339.7 1370.7,342.7 1366.0,350.7 1365.7,352.7 1368.0,353.0 1370.3,354.7 1374.3,359.3 1378.7,367.0 1382.3,377.0 1384.0,384.7 1384.3,392.7 1383.0,397.3 1381.0,399.3 1379.0,400.0 1379.0,401.3 1384.7,404.3 1388.3,405.7 1393.3,405.3 1401.0,402.3 1401.0,401.0 1398.0,396.7 1396.7,393.3 1395.7,389.0 1395.3,384.3 1396.0,378.0 1397.0,373.7 1399.0,367.7 1402.0,361.7 1402.0,360.0 1397.3,358.7 1392.7,356.3 1388.3,353.3 1382.3,347.3 1379.3,343.0 1378.0,340.0Z"/></clipPath>
<clipPath id="k12"><path d="M1385.3,291.7 1385.7,297.7 1387.0,297.7 1391.0,294.7 1391.0,293.3 1387.0,291.7Z"/></clipPath>
<clipPath id="k24"><path d="M1563.0,268.0 1559.3,269.0 1552.7,272.0 1546.3,276.7 1542.3,281.0 1540.0,284.3 1537.3,289.7 1535.3,296.3 1535.0,302.0 1537.0,304.7 1540.7,312.7 1543.0,322.3 1552.0,326.7 1555.7,326.7 1556.0,326.3 1564.7,326.7 1575.0,328.3 1577.3,328.3 1584.7,325.3 1584.3,317.7 1585.0,313.3 1587.0,306.3 1590.7,298.7 1592.7,295.7 1596.7,291.7 1600.0,290.0 1604.3,289.3 1604.3,287.7 1601.3,282.3 1596.3,276.7 1590.0,272.0 1586.7,270.3 1581.0,268.3 1575.3,267.3 1567.3,267.3Z"/></clipPath>
<clipPath id="k49"><path d="M1665.0,369.3 1660.7,374.3 1651.7,387.0 1651.3,389.3 1653.0,389.3 1657.0,390.7 1666.7,395.3 1682.0,405.0 1694.7,415.0 1701.7,422.3 1703.3,425.3 1703.3,426.3 1704.7,426.3 1707.3,424.0 1711.7,418.3 1714.3,413.0 1716.3,405.3 1716.7,397.7 1716.0,392.3 1714.3,386.7 1710.3,379.3 1706.0,374.3 1700.3,370.0 1695.0,367.3 1689.3,365.7 1684.0,365.0 1676.3,365.3 1668.7,367.3Z"/></clipPath>
<clipPath id="k0"><path d="M1378.7,177.0 1350.3,235.0 1350.3,236.3 1416.3,231.7 1418.3,224.3 1418.0,222.3 1388.3,178.3 1387.3,177.7 1383.3,177.0Z"/></clipPath>
<clipPath id="k1"><path d="M1387.0,177.7 1387.3,180.0 1417.0,224.0 1418.3,224.0 1421.7,219.7 1423.3,216.3 1425.3,209.0 1425.0,198.7 1423.7,194.0 1420.7,188.3 1418.0,185.0 1413.3,181.0 1405.7,177.3 1401.0,176.3 1392.7,176.3Z"/></clipPath>
<clipPath id="k2"><path d="M1374.3,171.3 1369.7,171.3 1369.3,171.7 1318.7,175.0 1314.0,181.0 1314.3,183.3 1350.0,236.0 1351.7,236.0 1379.7,178.7 1379.7,176.3Z"/></clipPath>
<clipPath id="k3"><path d="M1319.0,176.0 1374.0,172.3 1374.0,170.3 1372.0,166.0 1369.0,161.7 1365.7,158.3 1361.3,155.3 1357.7,153.7 1351.3,152.0 1342.7,152.0 1339.3,152.7 1332.7,155.3 1328.7,158.0 1324.7,162.0 1322.3,165.3 1320.3,169.3 1319.0,173.7Z"/></clipPath>
<clipPath id="k4"><path d="M1306.3,183.3 1282.3,232.3 1282.7,235.0 1285.3,241.0 1351.3,236.3 1351.3,235.0 1315.3,181.7 1313.7,181.3Z"/></clipPath>
<clipPath id="k5"><path d="M1307.0,183.3 1297.0,183.0 1293.3,183.7 1288.7,185.3 1282.3,189.3 1278.7,193.0 1276.3,196.3 1273.7,202.0 1272.3,208.7 1272.7,217.0 1273.7,221.0 1276.3,226.7 1278.7,230.0 1282.0,233.3 1283.7,233.3 1307.0,185.3Z"/></clipPath>
<clipPath id="k6"><path d="M1351.3,235.3 1285.3,240.0 1283.3,247.3 1283.7,249.3 1313.7,293.7 1318.3,294.7 1323.0,294.7 1351.3,236.7Z"/></clipPath>
<clipPath id="k7"><path d="M1283.3,247.7 1280.0,252.0 1278.3,255.3 1276.3,262.7 1276.7,273.0 1278.0,277.7 1281.0,283.3 1283.7,286.7 1288.3,290.7 1296.0,294.3 1300.7,295.3 1309.0,295.3 1314.7,294.0 1314.3,291.7 1284.7,247.7Z"/></clipPath>
<clipPath id="k8"><path d="M1351.7,235.7 1350.0,235.7 1322.0,293.0 1322.3,295.7 1325.0,295.7 1379.0,282.3 1379.7,281.7 1380.0,279.0 1379.7,277.0Z"/></clipPath>
<clipPath id="k9"><path d="M1418.3,235.0 1416.3,230.7 1414.7,230.7 1414.3,231.0 1405.0,231.3 1404.7,231.7 1400.3,231.7 1390.7,232.7 1350.3,235.3 1350.3,236.7 1378.7,278.7 1380.0,278.7 1418.3,237.3Z"/></clipPath>
<clipPath id="k10"><path d="M1419.3,236.0 1417.3,236.0 1379.0,277.3 1378.3,282.0 1385.3,292.7 1389.3,294.3 1391.3,294.3 1397.3,291.0 1401.0,289.7 1408.0,288.3 1414.3,288.3 1422.0,290.0 1430.0,294.0 1431.3,294.0 1421.3,243.0 1420.7,241.3 1420.0,236.7Z"/></clipPath>
<clipPath id="k11"><path d="M1322.7,294.7 1321.7,299.7 1321.7,306.0 1322.7,308.0 1326.7,313.0 1336.7,322.3 1347.3,330.7 1355.7,336.3 1367.3,342.7 1370.3,343.7 1372.3,343.7 1377.7,340.7 1377.7,339.3 1375.7,334.3 1374.3,327.3 1374.3,322.3 1375.0,318.0 1376.7,312.3 1379.3,306.7 1382.3,302.3 1386.7,298.0 1386.3,291.0 1379.7,281.0 1378.0,281.0Z"/></clipPath>
<clipPath id="k13"><path d="M1427.3,233.3 1420.7,235.3 1418.7,236.3 1418.7,237.7 1420.3,244.3 1429.0,289.0 1429.7,290.7 1430.0,293.7 1434.3,297.0 1439.7,302.7 1442.0,302.7 1449.0,300.3 1449.0,299.0 1447.3,295.7 1446.3,292.0 1446.0,285.0 1447.7,278.3 1449.7,274.3 1452.0,271.0 1457.0,266.3 1463.0,263.0 1466.3,262.0 1466.3,259.3 1462.7,248.3 1459.7,242.7 1457.7,240.3 1453.7,240.3 1445.7,238.3 1436.3,235.0 1433.3,233.0Z"/></clipPath>
<clipPath id="k19"><path d="M1473.7,260.0 1473.7,261.3 1478.3,262.0 1481.3,263.0 1485.3,265.0 1489.7,268.3 1493.7,268.3 1501.0,269.7 1505.7,271.3 1510.3,273.7 1513.7,276.0 1515.0,276.0 1515.3,266.0 1514.3,262.7 1512.7,259.7 1510.7,257.3 1507.0,254.7 1504.0,253.3 1497.3,252.0 1492.7,252.0 1488.0,252.7 1483.7,254.0 1478.7,256.3Z"/></clipPath>
<clipPath id="k34"><path d="M1461.3,357.7 1460.0,358.7 1460.0,360.3 1463.0,366.3 1463.3,374.3 1464.3,377.7 1464.7,382.0 1464.0,386.7 1462.7,391.0 1460.7,395.0 1459.0,397.0 1459.0,398.7 1464.3,402.0 1470.0,406.3 1481.0,417.3 1485.0,423.0 1486.3,425.7 1487.0,428.0 1487.0,432.0 1490.7,432.0 1493.3,431.3 1497.3,429.0 1503.0,424.0 1503.0,422.3 1501.0,419.0 1499.3,414.7 1498.0,408.3 1498.0,400.3 1500.0,392.3 1503.0,386.0 1505.0,383.0 1511.3,376.3 1517.0,372.7 1517.0,371.0 1516.3,369.7 1514.3,369.7 1506.3,372.3 1499.0,373.3 1492.0,373.0 1486.7,372.0 1481.3,370.3 1475.0,367.3 1468.7,363.0 1463.3,357.7Z"/></clipPath>
<clipPath id="k43"><path d="M1552.3,325.7 1552.3,330.3 1553.0,333.3 1555.3,339.3 1557.3,343.0 1562.3,350.0 1568.7,356.3 1572.3,359.0 1574.3,359.3 1577.3,352.7 1579.0,344.0 1579.0,336.0 1578.3,331.7 1577.0,327.3 1566.0,325.7 1560.7,325.7 1560.3,325.3Z"/></clipPath>
<clipPath id="k51"><path d="M1643.7,391.7 1643.0,392.3 1643.0,396.7 1641.3,402.3 1640.3,404.0 1640.3,406.0 1644.3,412.3 1650.0,423.7 1651.0,423.7 1654.7,425.3 1659.7,429.0 1664.7,435.3 1666.7,440.3 1667.3,443.3 1667.0,448.0 1665.0,452.7 1663.3,454.7 1663.3,456.7 1664.0,458.0 1664.7,461.7 1665.0,462.0 1668.7,461.7 1679.0,458.7 1687.0,455.0 1695.0,449.7 1699.0,445.7 1700.7,443.3 1702.0,440.7 1703.7,435.0 1704.3,430.3 1704.3,424.0 1701.3,419.3 1693.7,412.0 1683.3,404.0 1670.3,395.7 1660.0,390.3 1654.3,388.3 1651.0,388.0Z"/></clipPath>
<clipPath id="k15"><path d="M1444.3,189.3 1439.7,191.0 1434.3,194.3 1430.3,198.3 1427.7,202.3 1425.3,208.3 1424.7,212.3 1424.7,218.3 1425.3,222.3 1427.0,227.0 1428.7,230.0 1433.0,235.0 1438.3,237.3 1446.7,240.0 1454.7,241.7 1458.3,241.3 1463.0,239.7 1468.3,236.3 1472.3,232.3 1475.0,228.3 1477.3,222.3 1478.0,218.3 1478.0,212.3 1477.3,208.3 1475.7,203.7 1472.3,198.3 1468.3,194.3 1464.3,191.7 1458.3,189.3 1454.3,188.7 1448.3,188.7Z"/></clipPath>
<clipPath id="k29"><path d="M1364.7,351.7 1356.0,356.3 1351.7,359.7 1348.0,364.0 1345.3,371.3 1345.0,373.7 1345.3,382.3 1347.0,387.7 1349.0,391.3 1351.0,394.0 1356.3,398.7 1360.0,400.7 1365.3,402.3 1367.7,402.7 1376.3,402.3 1382.3,400.3 1384.3,398.0 1385.3,394.0 1385.3,386.0 1384.3,379.7 1380.7,368.0 1378.0,362.3 1375.3,358.0 1373.0,355.0 1369.3,352.0Z"/></clipPath>
<clipPath id="k52"><path d="M1640.0,404.7 1638.0,407.0 1633.7,410.7 1625.3,416.3 1620.3,429.7 1614.0,444.0 1609.7,452.3 1609.7,453.7 1630.3,462.3 1643.3,468.7 1651.7,473.7 1653.3,473.7 1658.7,471.0 1662.0,468.0 1666.0,462.0 1666.0,460.7 1664.3,454.7 1661.7,454.7 1657.3,452.3 1654.0,448.7 1651.7,444.7 1649.7,438.7 1649.0,433.7 1649.3,429.0 1650.0,426.0 1651.0,424.0 1651.0,422.0 1642.0,405.3 1641.3,404.7Z"/></clipPath>
<clipPath id="k54"><path d="M1572.3,397.0 1570.7,399.0 1571.0,407.3 1570.0,413.0 1568.3,418.0 1566.0,422.7 1564.7,424.3 1564.7,426.0 1570.3,430.0 1577.0,436.7 1580.3,440.7 1586.7,450.0 1589.7,456.0 1590.3,458.7 1592.7,458.7 1610.7,453.7 1615.0,445.3 1621.3,431.0 1626.0,419.0 1626.3,416.3 1620.7,416.0 1611.0,414.3 1594.7,409.7 1583.0,404.7 1576.3,400.3 1573.7,397.0Z"/></clipPath>
<clipPath id="k55"><path d="M1611.0,452.7 1609.0,452.7 1590.7,457.7 1587.0,464.3 1580.3,473.3 1580.3,474.7 1583.7,478.0 1588.0,484.7 1591.7,492.0 1595.0,501.0 1597.0,510.3 1597.0,513.0 1596.0,515.3 1595.0,516.3 1595.0,518.0 1600.0,520.3 1605.3,522.0 1608.3,522.0 1653.0,474.3 1652.7,472.3 1644.7,467.7 1631.7,461.3Z"/></clipPath>
<clipPath id="k56"><path d="M1653.3,473.0 1652.0,473.0 1607.0,521.0 1607.3,523.0 1611.7,528.7 1618.7,534.3 1624.0,537.0 1628.0,538.3 1633.3,539.3 1640.0,539.3 1647.0,538.0 1655.3,534.3 1659.7,531.3 1664.3,526.3 1668.0,521.0 1671.7,513.3 1673.3,507.3 1673.7,500.3 1672.3,493.0 1669.3,486.3 1666.0,482.0 1660.3,477.0Z"/></clipPath>
<clipPath id="k36"><path d="M1509.0,448.7 1505.3,450.3 1500.0,455.0 1497.3,458.7 1495.3,462.7 1493.7,469.7 1493.7,476.0 1494.7,481.0 1497.3,487.0 1500.0,490.7 1502.7,493.3 1507.0,496.3 1510.7,498.0 1516.0,499.3 1525.0,499.0 1528.7,497.3 1531.0,495.7 1536.0,490.3 1538.7,486.0 1542.0,477.0 1543.0,470.3 1543.0,465.3 1540.0,459.3 1539.0,454.3 1533.7,451.0 1528.0,449.0 1520.3,447.7 1514.3,447.7Z"/></clipPath>
<clipPath id="k41"><path d="M1598.7,289.0 1595.3,290.7 1591.7,294.3 1588.7,299.0 1586.7,303.3 1585.0,308.0 1583.7,314.0 1583.3,325.0 1584.7,327.0 1590.0,332.0 1598.0,336.7 1606.0,339.0 1612.7,339.0 1622.7,334.0 1627.7,329.3 1631.0,322.3 1632.0,316.7 1632.0,312.0 1631.0,306.3 1628.7,301.0 1626.7,298.0 1622.0,293.3 1618.3,291.0 1614.3,289.3 1610.0,288.3 1601.7,288.3Z"/></clipPath>
<clipPath id="k32"><path d="M1460.3,397.7 1458.7,397.7 1453.3,403.0 1446.7,406.7 1439.7,408.3 1433.3,408.0 1430.0,409.7 1420.0,413.3 1418.3,416.3 1416.3,421.7 1415.0,429.3 1415.3,436.0 1417.0,442.7 1420.0,449.0 1423.3,453.7 1429.3,459.3 1432.3,461.3 1440.7,465.0 1447.7,466.3 1455.3,466.3 1462.3,465.0 1469.0,462.3 1475.0,458.3 1480.0,453.3 1484.0,447.3 1487.0,439.7 1488.0,434.0 1488.0,426.7 1486.0,421.7 1482.0,416.0 1474.0,407.7 1465.7,401.0Z"/></clipPath>
<clipPath id="k46"><path d="M1620.0,352.0 1616.7,354.3 1613.3,357.7 1611.7,360.0 1611.7,361.7 1616.3,364.7 1628.3,375.0 1639.3,386.3 1642.3,390.3 1642.7,391.7 1645.3,391.3 1648.0,389.3 1652.0,385.0 1654.7,380.3 1656.0,376.3 1656.3,367.3 1655.0,362.3 1653.3,359.0 1651.7,356.7 1647.3,352.7 1643.0,350.3 1640.0,349.3 1636.0,348.7 1628.0,349.0 1624.3,350.0Z"/></clipPath>
<clipPath id="k26"><path d="M1424.0,357.3 1422.3,357.3 1418.0,359.0 1410.3,360.7 1406.0,361.0 1403.3,360.3 1401.0,360.3 1397.0,369.0 1394.7,379.0 1394.7,382.7 1394.3,383.0 1394.7,390.3 1396.0,395.7 1398.7,400.7 1401.0,403.7 1406.3,408.7 1413.7,412.7 1419.0,414.3 1421.7,414.3 1434.3,409.3 1434.3,408.0 1428.3,406.7 1423.7,404.3 1421.3,402.7 1416.7,398.0 1413.0,391.7 1411.3,386.0 1411.0,383.3 1411.3,377.7 1413.3,371.0 1417.7,364.0 1421.0,360.7 1424.0,358.7ZM1431.0,353.7 1431.0,355.0 1433.0,355.0 1435.3,354.3 1439.7,354.3 1444.7,355.3 1449.7,357.3 1453.3,359.7 1457.7,363.7 1460.7,367.7 1462.7,371.7 1463.0,373.3 1464.3,373.3 1464.0,365.0 1461.7,359.7 1458.7,355.3 1453.3,350.0 1448.0,346.3 1443.7,344.3 1441.7,344.3 1437.3,349.7Z"/></clipPath>
<clipPath id="k48"><path d="M1584.3,367.7 1581.0,371.0 1577.3,376.0 1575.0,380.7 1573.3,385.7 1572.7,389.3 1572.7,398.3 1573.7,400.0 1576.7,402.7 1584.3,407.0 1598.3,412.3 1609.7,415.3 1622.3,417.3 1627.3,417.0 1635.0,411.7 1640.7,406.7 1642.3,403.7 1644.0,398.0 1644.0,390.7 1643.3,389.0 1637.7,382.0 1629.7,374.0 1616.3,362.7 1611.7,360.0 1600.7,359.7 1592.0,362.7 1587.3,365.3Z"/></clipPath>
<clipPath id="k37"><path d="M1566.0,425.0 1564.3,425.0 1562.7,427.3 1557.7,432.3 1553.0,435.7 1547.0,438.7 1543.0,440.0 1540.0,440.3 1538.0,447.0 1538.0,456.7 1539.0,460.7 1542.0,467.0 1544.3,470.0 1549.3,474.3 1558.0,478.7 1562.3,478.3 1581.7,474.3 1588.0,465.7 1591.7,459.0 1590.7,454.7 1587.7,448.7 1581.3,439.3 1571.7,429.0Z"/></clipPath>
<clipPath id="k38"><path d="M1581.3,473.3 1558.3,477.7 1554.7,481.3 1552.0,485.0 1550.3,488.0 1548.3,493.7 1547.7,497.7 1547.7,502.7 1548.3,506.7 1551.0,513.3 1554.3,518.0 1558.3,521.7 1564.3,525.0 1568.3,526.3 1573.0,527.0 1577.3,527.0 1581.7,526.3 1586.0,525.0 1590.0,523.0 1594.7,519.3 1597.0,516.7 1598.0,514.3 1598.0,509.0 1597.0,503.3 1592.7,490.7 1587.7,481.0 1584.7,476.7Z"/></clipPath>
<clipPath id="k53"><path d="M1650.0,422.7 1649.3,423.7 1648.3,427.7 1648.0,435.0 1648.7,440.0 1650.7,446.0 1653.0,450.0 1656.0,453.3 1660.3,455.7 1664.7,455.7 1667.3,451.3 1668.3,447.3 1668.3,442.0 1666.7,436.0 1663.7,431.0 1659.0,426.3 1654.0,423.3 1652.3,422.7Z"/></clipPath>
<clipPath id="k25"><path d="M1418.0,287.7 1415.7,287.3 1404.0,287.7 1397.7,289.3 1391.3,292.3 1384.3,297.7 1380.3,302.3 1376.3,309.3 1374.0,316.7 1373.3,321.0 1373.7,331.3 1376.0,339.7 1378.3,344.3 1383.7,351.3 1388.3,355.3 1396.0,359.7 1402.3,361.7 1404.7,362.0 1411.7,361.7 1419.3,360.0 1424.3,358.3 1435.0,353.3 1440.0,349.3 1443.3,344.7 1446.0,339.3 1447.7,334.0 1448.7,326.3 1448.3,319.3 1446.0,310.3 1443.3,305.0 1440.0,300.3 1432.7,293.7 1426.0,290.0Z"/></clipPath>
<clipPath id="k22"><path d="M1528.7,292.0 1527.0,292.0 1523.7,294.0 1516.3,297.0 1486.7,307.3 1460.0,315.3 1454.3,316.7 1451.3,316.7 1450.3,323.0 1450.3,331.7 1452.3,342.0 1456.7,351.7 1460.7,357.3 1465.0,362.0 1472.0,367.3 1480.0,371.3 1485.3,373.0 1490.7,374.0 1500.3,374.3 1507.7,373.3 1515.3,371.0 1521.3,368.0 1526.3,364.7 1533.0,358.3 1538.0,351.3 1542.3,341.3 1544.0,333.0 1544.0,321.7 1542.3,313.3 1538.0,303.3 1533.0,296.3Z"/></clipPath>
<clipPath id="k21"><path d="M1528.3,291.7 1525.0,285.3 1522.0,281.3 1517.3,276.7 1513.3,273.7 1507.0,270.3 1502.3,268.7 1495.0,267.3 1490.0,267.3 1490.0,268.7 1493.0,272.0 1494.3,274.3 1494.7,279.7 1493.3,284.0 1488.7,292.0 1485.0,296.3 1478.7,302.0 1473.0,305.7 1466.7,308.3 1461.7,309.3 1459.0,309.0 1456.0,307.7 1452.0,303.7 1450.3,303.7 1450.3,312.0 1451.3,317.7 1451.7,318.0 1455.7,317.7 1465.0,315.3 1501.0,304.0 1525.0,295.0 1527.7,293.7 1528.3,293.0Z"/></clipPath>
<clipPath id="k33"><path d="M1527.0,367.3 1519.3,369.7 1511.7,374.0 1505.3,380.0 1502.0,384.7 1499.0,391.0 1497.0,399.0 1497.0,409.7 1497.7,413.3 1500.0,420.3 1503.7,426.7 1509.0,432.7 1514.3,436.7 1521.3,440.0 1527.7,441.7 1538.7,442.0 1544.3,441.0 1550.0,439.0 1556.3,435.3 1559.0,433.3 1563.7,428.7 1567.0,424.0 1569.3,419.3 1571.7,411.0 1572.0,400.3 1571.3,396.0 1568.3,387.3 1565.3,382.3 1559.7,376.0 1554.7,372.3 1547.0,368.7 1539.7,367.0Z"/></clipPath>
<clipPath id="k27"><path d="M1430.3,354.0 1426.0,355.7 1421.3,358.3 1416.7,362.7 1413.7,367.0 1411.0,373.3 1410.0,379.0 1410.0,384.7 1411.3,391.3 1414.0,397.0 1415.7,399.3 1421.3,404.7 1427.0,407.7 1434.0,409.3 1441.0,409.3 1446.0,408.3 1450.3,406.7 1454.7,404.0 1458.7,400.3 1461.7,396.3 1463.7,392.3 1465.3,386.3 1465.7,379.3 1464.7,373.3 1461.7,366.3 1458.7,362.3 1454.7,358.7 1451.0,356.3 1446.0,354.3 1441.0,353.3 1434.0,353.3Z"/></clipPath>
<clipPath id="k20"><path d="M1486.7,264.0 1482.7,262.0 1476.3,260.3 1466.0,260.7 1461.7,262.0 1457.7,264.0 1454.3,266.3 1450.0,271.0 1446.7,277.0 1445.7,280.0 1445.0,283.7 1445.0,291.3 1446.0,296.0 1448.3,301.3 1452.0,306.3 1454.7,308.7 1457.7,310.0 1463.0,310.3 1468.0,309.3 1472.3,307.7 1476.0,305.7 1481.7,301.7 1486.0,297.7 1489.7,293.3 1492.3,289.3 1495.3,282.3 1495.7,274.0 1494.7,271.7 1492.7,269.0Z"/></clipPath>
<clipPath id="k23"><path d="M1488.0,317.0 1481.7,319.7 1477.7,322.3 1473.3,326.7 1470.3,331.3 1469.0,334.7 1468.0,339.3 1468.0,346.3 1469.7,352.7 1472.0,357.3 1474.7,361.0 1479.3,365.3 1485.0,368.7 1488.7,370.0 1494.0,371.0 1501.0,371.0 1509.0,369.0 1516.0,365.0 1521.0,360.0 1524.3,354.7 1526.0,350.3 1527.0,345.3 1527.0,340.0 1525.3,333.0 1521.7,326.7 1517.3,322.3 1510.7,318.3 1502.3,316.0 1493.0,316.0Z"/></clipPath>
</defs>
<g filter="url(#bl2)"><line x1="1429.5" y1="215" x2="1733" y2="242" stroke="#f2f2f2" stroke-width="2.0" stroke-linecap="round"/><line x1="1733" y1="242" x2="1725" y2="421.5" stroke="#f2f2f2" stroke-width="2.0" stroke-linecap="round"/><line x1="1733" y1="242" x2="1605" y2="330.5" stroke="#f2f2f2" stroke-width="2.0" stroke-linecap="round"/><line x1="1420" y1="399" x2="1725" y2="421.5" stroke="#f2f2f2" stroke-width="2.0" stroke-linecap="round"/><line x1="1292.3" y1="487" x2="1420" y2="399" stroke="#f2f2f2" stroke-width="2.0" stroke-linecap="round"/><line x1="1725" y1="421.5" x2="1597.3" y2="513.4" stroke="#f2f2f2" stroke-width="2.0" stroke-linecap="round"/><line x1="1301" y1="309.7" x2="1604" y2="332.6" stroke="#1848f0" stroke-width="2.6" stroke-linecap="round"/><line x1="1302" y1="305.8" x2="1318.8" y2="295.7" stroke="#6ad020" stroke-width="2.4" stroke-linecap="round"/></g>
<g filter="url(#bl2)">
<circle cx="1406.0" cy="428.0" r="23.3" fill="url(#sH)" clip-path="url(#k31)"/>
<circle cx="1503.0" cy="254.0" r="26.9" fill="url(#sH)" clip-path="url(#k18)"/>
<circle cx="1702.9" cy="475.0" r="40.8" fill="url(#sC)" clip-path="url(#k57)"/>
<circle cx="1720.8" cy="461.2" r="28.9" fill="url(#sH)" clip-path="url(#k58)"/>
<circle cx="1705.7" cy="512.2" r="40.8" fill="url(#sC)" clip-path="url(#k59)"/>
<circle cx="1725.4" cy="523.1" r="28.9" fill="url(#sH)" clip-path="url(#k60)"/>
<circle cx="1677.2" cy="529.7" r="40.8" fill="url(#sC)" clip-path="url(#k61)"/>
<circle cx="1678.0" cy="552.2" r="28.9" fill="url(#sH)" clip-path="url(#k62)"/>
<circle cx="1649.1" cy="516.4" r="40.8" fill="url(#sC)" clip-path="url(#k63)"/>
<circle cx="1631.2" cy="530.2" r="28.9" fill="url(#sH)" clip-path="url(#k64)"/>
<circle cx="1646.3" cy="479.2" r="40.8" fill="url(#sC)" clip-path="url(#k65)"/>
<circle cx="1674.8" cy="461.7" r="40.8" fill="url(#sC)" clip-path="url(#k66)"/>
<circle cx="1484.0" cy="259.0" r="36.8" fill="url(#sC)" clip-path="url(#k17)"/>
<circle cx="1428.0" cy="411.0" r="40.8" fill="url(#sC)" clip-path="url(#k30)"/>
<circle cx="1571.9" cy="517.0" r="25.6" fill="url(#sHd)" clip-path="url(#k39)"/>
<circle cx="1573.8" cy="399.0" r="37.5" fill="url(#sN)" clip-path="url(#k50)"/>
<circle cx="1447.0" cy="303.0" r="26.9" fill="url(#sH)" clip-path="url(#k16)"/>
<circle cx="1530.0" cy="432.0" r="40.8" fill="url(#sC)" clip-path="url(#k35)"/>
<circle cx="1588.0" cy="345.0" r="40.8" fill="url(#sC)" clip-path="url(#k42)"/>
<circle cx="1548.0" cy="482.0" r="40.8" fill="url(#sC)" clip-path="url(#k40)"/>
<circle cx="1649.0" cy="354.0" r="26.9" fill="url(#sH)" clip-path="url(#k45)"/>
<circle cx="1548.4" cy="357.0" r="40.8" fill="url(#sC)" clip-path="url(#k44)"/>
<circle cx="1628.0" cy="362.0" r="40.8" fill="url(#sC)" clip-path="url(#k47)"/>
<circle cx="1341.5" cy="332.5" r="35.4" fill="url(#sO)" clip-path="url(#k14)"/>
<circle cx="1401.0" cy="367.0" r="40.8" fill="url(#sC)" clip-path="url(#k28)"/>
<circle cx="1396.2" cy="303.6" r="37.5" fill="url(#sN)" clip-path="url(#k12)"/>
<circle cx="1571.5" cy="304.0" r="36.8" fill="url(#sO)" clip-path="url(#k24)"/>
<circle cx="1682.0" cy="400.0" r="35.0" fill="url(#sO)" clip-path="url(#k49)"/>
<circle cx="1378.4" cy="217.5" r="40.8" fill="url(#sC)" clip-path="url(#k0)"/>
<circle cx="1397.0" cy="205.0" r="28.9" fill="url(#sH)" clip-path="url(#k1)"/>
<circle cx="1348.7" cy="203.1" r="40.8" fill="url(#sC)" clip-path="url(#k2)"/>
<circle cx="1347.1" cy="180.6" r="28.9" fill="url(#sH)" clip-path="url(#k3)"/>
<circle cx="1321.3" cy="221.5" r="40.8" fill="url(#sC)" clip-path="url(#k4)"/>
<circle cx="1301.1" cy="211.7" r="28.9" fill="url(#sH)" clip-path="url(#k5)"/>
<circle cx="1323.6" cy="254.5" r="40.8" fill="url(#sC)" clip-path="url(#k6)"/>
<circle cx="1305.0" cy="267.0" r="28.9" fill="url(#sH)" clip-path="url(#k7)"/>
<circle cx="1353.3" cy="268.9" r="40.8" fill="url(#sC)" clip-path="url(#k8)"/>
<circle cx="1380.7" cy="250.5" r="40.8" fill="url(#sC)" clip-path="url(#k9)"/>
<circle cx="1407.2" cy="275.1" r="40.8" fill="url(#sC)" clip-path="url(#k10)"/>
<circle cx="1362.2" cy="305.1" r="40.8" fill="url(#sC)" clip-path="url(#k11)"/>
<circle cx="1435.0" cy="269.5" r="36.8" fill="url(#sO)" clip-path="url(#k13)"/>
<circle cx="1489.0" cy="270.0" r="26.9" fill="url(#sH)" clip-path="url(#k19)"/>
<circle cx="1484.0" cy="392.0" r="40.8" fill="url(#sCn)" clip-path="url(#k34)"/>
<circle cx="1567.0" cy="343.0" r="26.4" fill="url(#sH)" clip-path="url(#k43)"/>
<circle cx="1664.0" cy="426.5" r="40.8" fill="url(#sC)" clip-path="url(#k51)"/>
<circle cx="1451.5" cy="215.5" r="26.9" fill="url(#sH)" clip-path="url(#k15)"/>
<circle cx="1371.0" cy="377.0" r="26.1" fill="url(#sH)" clip-path="url(#k29)"/>
<circle cx="1634.0" cy="440.0" r="41.9" fill="url(#sN)" clip-path="url(#k52)"/>
<circle cx="1600.0" cy="425.5" r="40.8" fill="url(#sC)" clip-path="url(#k54)"/>
<circle cx="1615.3" cy="482.6" r="40.8" fill="url(#sC)" clip-path="url(#k55)"/>
<circle cx="1638.0" cy="503.8" r="36.1" fill="url(#sO)" clip-path="url(#k56)"/>
<circle cx="1520.5" cy="473.0" r="26.9" fill="url(#sH)" clip-path="url(#k36)"/>
<circle cx="1606.0" cy="314.5" r="26.4" fill="url(#sH)" clip-path="url(#k41)"/>
<circle cx="1451.7" cy="430.0" r="36.8" fill="url(#sO)" clip-path="url(#k32)"/>
<circle cx="1631.5" cy="370.0" r="25.6" fill="url(#sH)" clip-path="url(#k46)"/>
<circle cx="1429.6" cy="379.2" r="37.5" fill="url(#sN)" clip-path="url(#k26)"/>
<circle cx="1608.4" cy="395.0" r="36.1" fill="url(#sO)" clip-path="url(#k48)"/>
<circle cx="1566.0" cy="452.0" r="28.3" fill="url(#sH)" clip-path="url(#k37)"/>
<circle cx="1575.3" cy="499.6" r="27.8" fill="url(#sH)" clip-path="url(#k38)"/>
<circle cx="1653.4" cy="437.0" r="23.3" fill="url(#sH)" clip-path="url(#k53)"/>
<circle cx="1411.1" cy="325.0" r="37.9" fill="url(#sO)" clip-path="url(#k25)"/>
<circle cx="1497.4" cy="327.5" r="47.2" fill="url(#sCn)" clip-path="url(#k22)"/>
<circle cx="1491.0" cy="308.0" r="40.8" fill="url(#sC)" clip-path="url(#k21)"/>
<circle cx="1534.6" cy="404.6" r="37.9" fill="url(#sO)" clip-path="url(#k33)"/>
<circle cx="1437.7" cy="381.5" r="28.3" fill="url(#sH)" clip-path="url(#k27)"/>
<circle cx="1472.3" cy="287.6" r="27.5" fill="url(#sH)" clip-path="url(#k20)"/>
<circle cx="1497.6" cy="341.5" r="30.0" fill="url(#sH)" clip-path="url(#k23)"/>
</g>
<g filter="url(#bl2)"><line x1="1299.3" y1="311" x2="1292.3" y2="487" stroke="#e8452f" stroke-width="2.4" stroke-linecap="round"/><line x1="1421.5" y1="319.0" x2="1604" y2="332.6" stroke="#1848f0" stroke-width="2.6" stroke-linecap="round"/><line x1="1356" y1="313.9" x2="1375" y2="315.4" stroke="#1848f0" stroke-width="2.6" stroke-linecap="round"/><line x1="1292.3" y1="487" x2="1597.3" y2="513.4" stroke="#f2f2f2" stroke-width="2.0" stroke-linecap="round"/><line x1="1604.3" y1="333" x2="1597.5" y2="513" stroke="#f2f2f2" stroke-width="2.0" stroke-linecap="round"/><line x1="1597.3" y1="513.4" x2="1631.5" y2="489" stroke="#f2f2f2" stroke-width="2.0" stroke-linecap="round"/><line x1="1655.4" y1="470.6" x2="1725" y2="421.5" stroke="#f2f2f2" stroke-width="2.0" stroke-linecap="round"/><line x1="1631.5" y1="313.4" x2="1733" y2="242" stroke="#f2f2f2" stroke-width="2.0" stroke-linecap="round"/><rect x="1298.2" y="305.3" width="4.4" height="4.4" fill="#7a7a7a"/><rect x="1602.8" y="328.3" width="4.4" height="4.4" fill="#7a7a7a"/><rect x="1427.3" y="212.8" width="4.4" height="4.4" fill="#7a7a7a"/><rect x="1290.5" y="485.2" width="3.6" height="3.6" fill="#9a9a9a"/><rect x="1595.5" y="511.59999999999997" width="3.6" height="3.6" fill="#9a9a9a"/></g>
</svg>
<div class="abs" style="left:0.0px;top:611.0px;width:880.0px;height:2.0px;background:#f4f4f4;"></div>
<div class="abs" style="left:0.0px;top:613.0px;width:880.0px;height:28.0px;background:linear-gradient(#ededed,#dadada 85%,#c8c8c8);"></div>
<div class="abs" style="left:0.0px;top:641.0px;width:880.0px;height:130.0px;background:#e9e9e9;"></div>
<div class="t" style="left:431.8px;top:620.8px;font-size:11.5px;line-height:11.5px;letter-spacing:-0.303px;color:#2a2a2a;">Display Options</div>
<svg class="abs" style="left:1px;top:619.5px" width="36" height="15" viewBox="0 0 36 15"><circle cx="8" cy="7.5" r="7" fill="#3c3c3c"/><path d="M5 4.5 L11 10.5 M11 4.5 L5 10.5" stroke="#e8e8e8" stroke-width="2.2"/><circle cx="28" cy="7.5" r="7" fill="#3c3c3c"/><circle cx="28" cy="7.5" r="4.3" fill="#dcdcdc"/><path d="M25.5 9 L30.5 6" stroke="#3c3c3c" stroke-width="1.6"/></svg>
<div class="abs" style="left:5.0px;top:657.0px;width:590.0px;height:110.0px;background:#e0e0e0;border-radius:5px;box-shadow:0 0 0 1px #d8d8d8;"></div>
<div class="abs" style="left:602.0px;top:657.0px;width:290.0px;height:110.0px;background:#e0e0e0;border-radius:5px;box-shadow:0 0 0 1px #d8d8d8;"></div>
<div class="t" style="left:13.1px;top:647.0px;font-size:11.5px;line-height:11.5px;letter-spacing:0.082px;color:#2a2a2a;">Display</div>
<div class="t" style="left:612.3px;top:647.0px;font-size:11.5px;line-height:11.5px;letter-spacing:0.261px;color:#2a2a2a;">Options</div>
<div class="abs" style="left:23.4px;top:672.6px;width:13.0px;height:13.0px;background:#ececec;border:1px solid #cfcfcf;border-radius:2.5px;box-sizing:border-box;"></div>
<div class="abs" style="left:23.4px;top:689.5px;width:13.0px;height:13.0px;background:#ececec;border:1px solid #cfcfcf;border-radius:2.5px;box-sizing:border-box;"></div>
<div class="abs" style="left:23.4px;top:706.5px;width:13.0px;height:13.0px;background:#fff;border:1px solid #cfcfcf;border-radius:2.5px;box-sizing:border-box;"></div>
<div class="t" style="left:41.5px;top:672.0px;font-size:13px;line-height:13px;letter-spacing:-0.142px;">Packing</div>
<div class="t" style="left:41.5px;top:688.8px;font-size:13px;line-height:13px;letter-spacing:-0.030px;color:#a5a5a5;">Asymmetric Unit</div>
<div class="t" style="left:41.5px;top:706.2px;font-size:13px;line-height:13px;letter-spacing:-0.019px;">Auto centre</div>
<div class="abs" style="left:24.0px;top:726.5px;width:108.0px;height:19.0px;background:#fff;border:1px solid #cfcfcf;border-bottom-color:#b8b8b8;border-radius:4px;box-sizing:border-box;"></div>
<div class="t" style="left:61.3px;top:727.4px;font-size:13px;line-height:13px;letter-spacing:-0.165px;">Reset</div>
<div class="abs" style="left:148.0px;top:671.5px;width:318.0px;height:81.0px;background:#fff;border:1px solid #c8c8c8;box-sizing:border-box;"></div>
<div class="abs" style="left:171.8px;top:672.6px;width:210.6px;height:16.0px;background:#d3d3d3;"></div>
<div class="abs" style="left:149.0px;top:738.0px;width:316.0px;height:13.5px;background:#f3f3f3;border-top:1px solid #e3e3e3;box-sizing:border-box;"></div>
<div class="abs" style="left:451.0px;top:672.5px;width:14.0px;height:79.0px;background:#f6f6f6;border-left:1px solid #e6e6e6;box-sizing:border-box;"></div>
<div class="abs" style="left:451.0px;top:738.0px;width:14.0px;height:13.5px;background:#e4e4e4;"></div>
<div class="abs" style="left:152.7px;top:673.5px;width:13.0px;height:13.0px;background:#ececec;border:1px solid #cfcfcf;border-radius:2.5px;box-sizing:border-box;"></div>
<div class="abs" style="left:152.7px;top:691.0px;width:13.0px;height:13.0px;background:#ececec;border:1px solid #cfcfcf;border-radius:2.5px;box-sizing:border-box;"></div>
<div class="t" style="left:173.0px;top:673.3px;font-size:12.5px;line-height:12.5px;letter-spacing:0.131px;color:#4a4a4a;">Short Contact</div>
<div class="t" style="left:264.4px;top:673.3px;font-size:12.5px;line-height:12.5px;letter-spacing:0.217px;color:#4a4a4a;">&lt; (sum of vdW radii)</div>
<div class="t" style="left:173.0px;top:691.0px;font-size:12.5px;line-height:12.5px;letter-spacing:0.123px;color:#555;">H-Bond</div>
<div class="t" style="left:264.9px;top:691.0px;font-size:12.5px;line-height:12.5px;letter-spacing:0.199px;color:#555;">Default definition</div>
<div class="abs" style="left:480.0px;top:675.0px;width:95.0px;height:19.5px;background:#fff;border:1px solid #cfcfcf;border-bottom-color:#b8b8b8;border-radius:4px;box-sizing:border-box;"></div>
<div class="abs" style="left:480.0px;top:702.2px;width:95.0px;height:19.5px;background:#fff;border:1px solid #cfcfcf;border-bottom-color:#b8b8b8;border-radius:4px;box-sizing:border-box;"></div>
<div class="abs" style="left:480.0px;top:728.0px;width:95.0px;height:19.5px;background:#fff;border:1px solid #cfcfcf;border-bottom-color:#b8b8b8;border-radius:4px;box-sizing:border-box;"></div>
<div class="t" style="left:496.5px;top:676.7px;font-size:13px;line-height:13px;letter-spacing:-0.054px;">Contacts...</div>
<div class="t" style="left:498.8px;top:702.8px;font-size:13px;line-height:13px;letter-spacing:-0.027px;">More Info</div>
<div class="t" style="left:500.6px;top:729.0px;font-size:13px;line-height:13px;letter-spacing:-0.087px;">Powder...</div>
<svg class="abs" style="left:559px;top:714.5px" width="7" height="5" viewBox="0 0 7 5"><path d="M0 0 L7 0 L3.5 4.5 Z" fill="#222"/></svg>
<div class="abs" style="left:618.6px;top:672.6px;width:13.0px;height:13.0px;background:#ececec;border:1px solid #cfcfcf;border-radius:2.5px;box-sizing:border-box;"></div>
<div class="abs" style="left:618.6px;top:689.5px;width:13.0px;height:13.0px;background:#ececec;border:1px solid #cfcfcf;border-radius:2.5px;box-sizing:border-box;"></div>
<div class="abs" style="left:618.6px;top:706.5px;width:13.0px;height:13.0px;background:#fff;border:1px solid #cfcfcf;border-radius:2.5px;box-sizing:border-box;"></div>
<div class="abs" style="left:736.0px;top:672.6px;width:13.0px;height:13.0px;background:#fff;border:1px solid #cfcfcf;border-radius:2.5px;box-sizing:border-box;"></div>
<div class="abs" style="left:736.0px;top:689.5px;width:13.0px;height:13.0px;background:#fff;border:1px solid #cfcfcf;border-radius:2.5px;box-sizing:border-box;"></div>
<div class="abs" style="left:736.0px;top:706.5px;width:13.0px;height:13.0px;background:#ececec;border:1px solid #cfcfcf;border-radius:2.5px;box-sizing:border-box;"></div>
<svg class="abs" style="left:620px;top:674px" width="11" height="11" viewBox="0 0 12 12"><path d="M2.5 6.5 L5 9.8 L10 1.5" fill="none" stroke="#c4c4c4" stroke-width="1.5"/></svg>
<svg class="abs" style="left:620px;top:691px" width="11" height="11" viewBox="0 0 12 12"><path d="M2.5 6.5 L5 9.8 L10 1.5" fill="none" stroke="#c4c4c4" stroke-width="1.5"/></svg>
<div class="t" style="left:636.5px;top:672.0px;font-size:13px;line-height:13px;letter-spacing:-0.065px;">Show hydrogens</div>
<div class="t" style="left:636.5px;top:688.8px;font-size:13px;line-height:13px;letter-spacing:-0.055px;">Show cell axes</div>
<div class="t" style="left:636.5px;top:706.2px;font-size:13px;line-height:13px;letter-spacing:-0.102px;">Label atoms</div>
<div class="t" style="left:753.5px;top:672.0px;font-size:13px;line-height:13px;letter-spacing:-0.133px;">Depth cue</div>
<div class="t" style="left:753.5px;top:688.8px;font-size:13px;line-height:13px;letter-spacing:-0.116px;">Z-Clipping</div>
<div class="t" style="left:753.5px;top:706.2px;font-size:13px;line-height:13px;letter-spacing:-0.061px;color:#a5a5a5;">Stereo</div>
<div class="abs" style="left:0.0px;top:768.0px;width:880.0px;height:12.0px;background:#ededed;"></div>
<div class="t" style="left:3.0px;top:774.4px;font-size:13px;line-height:13px;letter-spacing:0.008px;color:#111;">Press the mouse button and move the mouse to rotate the structure</div>
</div>
</div>
</body>
</html>
